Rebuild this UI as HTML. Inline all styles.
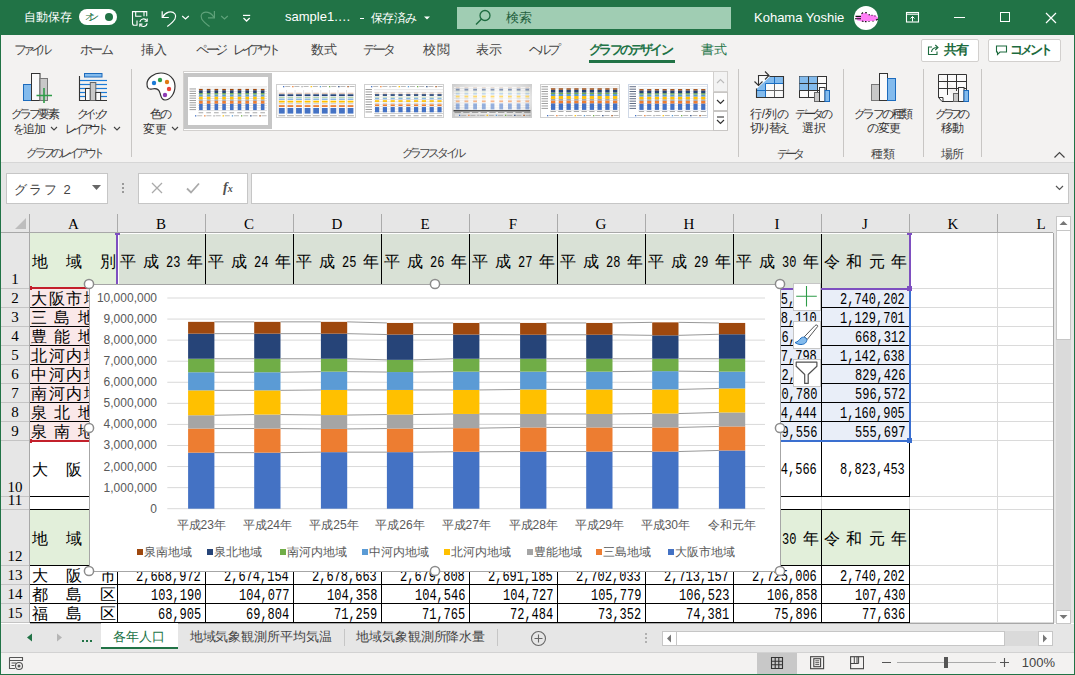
<!DOCTYPE html>
<html><head><meta charset="utf-8"><style>
html,body{margin:0;padding:0;}
body{width:1075px;height:675px;overflow:hidden;position:relative;background:#fff;font-family:'Liberation Sans', sans-serif;}
body>div{position:absolute;white-space:nowrap;box-sizing:border-box;}
body>div.b{box-sizing:border-box}
</style></head><body>
<div style="left:0px;top:0px;width:1075px;height:35px;background:#217346"></div>
<div style="left:24px;top:7.0px;height:20px;line-height:20px;font-size:12px;color:#fff;letter-spacing:0.00px;">自動保存</div>
<div style="left:79px;top:9px;width:38px;height:16px;background:#fff;border-radius:8px"></div>
<div style="left:85px;top:7.300000000000001px;height:20px;line-height:20px;font-size:10px;color:#217346;letter-spacing:-6.00px;">オン</div>
<div style="left:105px;top:13px;width:8px;height:8px;background:#217346;border-radius:50%"></div>
<svg style="position:absolute;left:131px;top:10px;" width="18" height="18" viewBox="0 0 18 18"><path d="M1.5 13.2 V1.6 H15.75 V6.3" fill="none" stroke="#fff" stroke-width="1.1"/><path d="M1.5 13 Q1.5 15.3 3.2 15.3 H6.5" fill="none" stroke="#fff" stroke-width="1.1"/><path d="M4.7 1.6 V6.3 H10.5 M13 1.6 V6.3 M6 10.5 V15" fill="none" stroke="#fff" stroke-width="1.1"/><path d="M8.9 12 A3.7 3.7 0 0 1 15.8 10.8 M16.1 13.4 A3.7 3.7 0 0 1 9.2 14.6" fill="none" stroke="#fff" stroke-width="1.1"/><path d="M16.2 8.6 V11.3 H13.6 M8.8 16.8 V14.1 H11.4" fill="none" stroke="#fff" stroke-width="1.1"/></svg>
<svg style="position:absolute;left:160px;top:9px;" width="20" height="20" viewBox="0 0 20 20"><path d="M2.2 2.3 V8.5 H8.8" fill="none" stroke="#fff" stroke-width="1.2"/><path d="M2.8 8 C5 3 12 1 15 5 C17 8 15.5 11 7.3 17.5" fill="none" stroke="#fff" stroke-width="1.2"/></svg>
<svg style="position:absolute;left:181px;top:15px;" width="9" height="5" viewBox="0 0 9 5"><path d="M1.2 1 L4.5 4 L7.8 1" fill="none" stroke="#fff" stroke-width="1.2"/></svg>
<svg style="position:absolute;left:199px;top:9px;" width="20" height="20" viewBox="0 0 20 20"><path d="M15.4 2 V8.8 H9" fill="none" stroke="#5fa27a" stroke-width="1.2"/><path d="M14.8 8.3 C12.5 3 5.5 1.5 2.8 5 C0.8 8 2 11 10.6 17.5" fill="none" stroke="#5fa27a" stroke-width="1.2"/></svg>
<svg style="position:absolute;left:220px;top:15px;" width="9" height="5" viewBox="0 0 9 5"><path d="M1.2 1 L4.5 4 L7.8 1" fill="none" stroke="#5fa27a" stroke-width="1.2"/></svg>
<svg style="position:absolute;left:242px;top:13px;" width="10" height="10" viewBox="0 0 10 10"><path d="M1 2.4 H8.2" stroke="#fff" stroke-width="1.2"/><path d="M1.5 5 L4.6 8 L7.7 5" fill="none" stroke="#fff" stroke-width="1.3"/></svg>
<div style="left:285px;top:7.300000000000001px;width:400px;height:20px;line-height:20px;font-size:13px;color:#fff;">sample1.…</div>
<div style="left:360px;top:18px;width:4px;height:1px;background:#fff"></div>
<div style="left:370.5px;top:7.5px;height:20px;line-height:20px;font-size:12px;color:#fff;letter-spacing:-0.37px;">保存済み</div>
<svg style="position:absolute;left:424px;top:16px;" width="6" height="4" viewBox="0 0 6 4"><path d="M0 0.5 L3 3.5 L6 0.5Z" fill="#fff"/></svg>
<div style="left:457px;top:7px;width:274px;height:22px;background:#a0cdb3"></div>
<svg style="position:absolute;left:474px;top:9px;" width="18" height="18" viewBox="0 0 18 18"><circle cx="11" cy="6.5" r="5" fill="none" stroke="#1e6b40" stroke-width="1.3"/><path d="M7.5 10 L2 15.5" stroke="#1e6b40" stroke-width="1.4"/></svg>
<div style="left:506px;top:8.0px;width:400px;height:20px;line-height:20px;font-size:13px;color:#1e5e3b;">検索</div>
<div style="left:754px;top:8.0px;width:400px;height:20px;line-height:20px;font-size:13px;color:#fff;">Kohama Yoshie</div>
<div style="left:854px;top:6px;width:24px;height:24px;background:#fff;border-radius:50%"></div>
<svg style="position:absolute;left:850px;top:0.3px;" width="34" height="28" viewBox="0 0 34 28"><path d="M6 17.5 L11 16 L11.5 13.5 L16 12.8 L19 15 L25 15.3 L28 17.5 L27.5 19.5 L24 21 L12 21.6 L7 20.2 Z" fill="#ff7ef6"/><path d="M5.5 16.4 H11 M5 18.8 H11 M11.5 13.8 L13 12.5 M15 12.8 H17 M18.5 14.8 H20 M21.5 15.3 H22.5 M24.5 16 H25.5 M12 21 L13.5 21.6 M15 21.6 H16.5 M18.5 21.5 H19.5 M22.5 21.2 H23.5 M26 20.3 L27.8 19" stroke="#111" stroke-width="1.1"/></svg>
<svg style="position:absolute;left:905px;top:11px;" width="16" height="12" viewBox="0 0 16 12"><rect x="1.5" y="1.5" width="12" height="9.5" fill="none" stroke="#fff" stroke-width="1.1"/><path d="M1.5 3.2 H13.5" stroke="#fff" stroke-width="1.1"/><path d="M7.5 10.5 V5.5 M5.5 7.5 L7.5 5.5 L9.5 7.5" fill="none" stroke="#fff" stroke-width="1"/></svg>
<div style="left:954px;top:17px;width:11px;height:1px;background:#fff"></div>
<div style="left:1000px;top:12px;width:10px;height:10px;border:1px solid #fff;box-sizing:border-box"></div>
<svg style="position:absolute;left:1045px;top:12px;" width="12" height="12" viewBox="0 0 12 12"><path d="M1 1 L11 11 M11 1 L1 11" stroke="#fff" stroke-width="1.2"/></svg>
<div style="left:1px;top:35px;width:1073px;height:128px;background:#f3f2f1"></div>
<div style="left:14px;top:40.0px;height:20px;line-height:20px;font-size:13px;color:#444;letter-spacing:-4.67px;">ファイル</div>
<div style="left:80px;top:40.0px;height:20px;line-height:20px;font-size:13px;color:#444;letter-spacing:-2.70px;">ホーム</div>
<div style="left:141px;top:40.0px;height:20px;line-height:20px;font-size:13px;color:#444;letter-spacing:0.00px;">挿入</div>
<div style="left:196px;top:40.0px;height:20px;line-height:20px;font-size:13px;color:#444;letter-spacing:-3.45px;">ページ</div>
<div style="left:233.3px;top:40.0px;height:20px;line-height:20px;font-size:13px;color:#444;letter-spacing:-4.40px;">レイアウト</div>
<div style="left:310.5px;top:40.0px;height:20px;line-height:20px;font-size:13px;color:#444;letter-spacing:0.50px;">数式</div>
<div style="left:363px;top:40.0px;height:20px;line-height:20px;font-size:13px;color:#444;letter-spacing:-3.00px;">データ</div>
<div style="left:423px;top:40.0px;height:20px;line-height:20px;font-size:13px;color:#444;letter-spacing:1.00px;">校閲</div>
<div style="left:476px;top:40.0px;height:20px;line-height:20px;font-size:13px;color:#444;letter-spacing:0.00px;">表示</div>
<div style="left:529px;top:40.0px;height:20px;line-height:20px;font-size:13px;color:#444;letter-spacing:-3.65px;">ヘルプ</div>
<div style="left:589.3px;top:40.0px;height:20px;line-height:20px;font-size:13px;color:#217346;letter-spacing:-2.80px;font-weight:bold">グラフのデザイン</div>
<div style="left:589px;top:60px;width:86px;height:3px;background:#217346"></div>
<div style="left:701.4px;top:40.0px;height:20px;line-height:20px;font-size:13px;color:#217346;letter-spacing:-0.80px;">書式</div>
<div style="left:921px;top:39px;width:58px;height:23px;background:#fff;border:1px solid #d2d0ce;box-sizing:border-box;border-radius:2px"></div>
<svg style="position:absolute;left:927px;top:43px;" width="13" height="13" viewBox="0 0 13 13"><path d="M5 4 H1.5 V11.5 H10 V8.5" fill="none" stroke="#1d6b3e" stroke-width="1.1"/><path d="M4.5 9 Q5 4.5 10.5 4.5 M8.3 2 L11 4.5 L8.3 7" fill="none" stroke="#1d6b3e" stroke-width="1.1"/></svg>
<div style="left:944px;top:40.0px;height:20px;line-height:20px;font-size:13px;color:#1d6b3e;letter-spacing:-1.00px;font-weight:bold">共有</div>
<div style="left:988px;top:39px;width:73px;height:23px;background:#fff;border:1px solid #d2d0ce;box-sizing:border-box;border-radius:2px"></div>
<svg style="position:absolute;left:995px;top:45px;" width="13" height="11" viewBox="0 0 13 11"><path d="M1.5 1 H11.5 V7 H5 L2.5 9.5 V7 H1.5Z" fill="none" stroke="#1d6b3e" stroke-width="1.1"/></svg>
<div style="left:1010.4px;top:40.0px;height:20px;line-height:20px;font-size:13px;color:#1d6b3e;letter-spacing:-3.23px;font-weight:bold">コメント</div>
<div style="left:1px;top:162px;width:1073px;height:1px;background:#d6d6d6"></div>
<div style="left:131px;top:69px;width:1px;height:88px;background:#c8c6c4"></div>
<div style="left:738px;top:69px;width:1px;height:88px;background:#c8c6c4"></div>
<div style="left:843px;top:69px;width:1px;height:88px;background:#c8c6c4"></div>
<div style="left:923px;top:69px;width:1px;height:88px;background:#c8c6c4"></div>
<div style="left:981px;top:69px;width:1px;height:88px;background:#c8c6c4"></div>
<div style="left:26.3px;top:143.3px;height:20px;line-height:20px;font-size:12px;color:#444;letter-spacing:-3.66px;">グラフのレイアウト</div>
<div style="left:401.7px;top:143.3px;height:20px;line-height:20px;font-size:12px;color:#444;letter-spacing:-3.24px;">グラフ スタイル</div>
<div style="left:776.7px;top:143.5px;height:20px;line-height:20px;font-size:12px;color:#444;letter-spacing:-3.85px;">データ</div>
<div style="left:871.4px;top:143.5px;height:20px;line-height:20px;font-size:12px;color:#444;letter-spacing:-0.10px;">種類</div>
<div style="left:940.5px;top:143.5px;height:20px;line-height:20px;font-size:12px;color:#444;letter-spacing:-0.80px;">場所</div>
<svg style="position:absolute;left:1053px;top:151px;" width="13" height="8" viewBox="0 0 13 8"><path d="M1.5 6.5 L6.5 1.5 L11.5 6.5" fill="none" stroke="#444" stroke-width="1.2"/></svg>
<svg style="position:absolute;left:22px;top:72px;" width="32" height="32" viewBox="0 0 32 32"><rect x="1.5" y="12.5" width="8" height="16" fill="#83bbed" stroke="#1c6bbd" stroke-width="1"/><rect x="9.5" y="1.5" width="8.5" height="27" fill="#fafafa" stroke="#333" stroke-width="1"/><rect x="18" y="6.5" width="7.5" height="22" fill="#c8c8c8" stroke="#777" stroke-width="1"/><path d="M14.5 23.5 H30 M22 16 V31" stroke="#2e9c48" stroke-width="1.6"/></svg>
<div style="left:10.7px;top:103.8px;height:20px;line-height:20px;font-size:12px;color:#333;letter-spacing:-2.73px;">グラフ要素</div>
<div style="left:13px;top:118.6px;height:20px;line-height:20px;font-size:12px;color:#333;letter-spacing:-1.60px;">を追加</div>
<svg style="position:absolute;left:50px;top:126px;" width="8" height="5" viewBox="0 0 8 5"><path d="M1 1 L4 4 L7 1" fill="none" stroke="#444" stroke-width="1.1"/></svg>
<svg style="position:absolute;left:78px;top:72px;" width="30" height="30" viewBox="0 0 30 30"><rect x="6.5" y="1.5" width="17.5" height="3.5" fill="#83bbed" stroke="#1c6bbd" stroke-width="1"/><path d="M1.5 8.5 H29" stroke="#1c7bd6" stroke-width="1.2"/><path d="M1.5 12.5 H29" stroke="#1c7bd6" stroke-width="1.2"/><path d="M1.5 16.5 H29" stroke="#1c7bd6" stroke-width="1.2"/><path d="M1.5 20.5 H29" stroke="#1c7bd6" stroke-width="1.2"/><path d="M1.5 24.5 H29" stroke="#1c7bd6" stroke-width="1.2"/><path d="M1.5 4 V28.5 H29" fill="none" stroke="#333" stroke-width="1.1"/><rect x="7.5" y="16.5" width="4.8" height="12" fill="#fafafa" stroke="#333" stroke-width="1"/><rect x="12.3" y="10.5" width="5.5" height="18" fill="#c8c8c8" stroke="#666" stroke-width="1"/><rect x="17.8" y="20.5" width="4.8" height="8" fill="#fafafa" stroke="#333" stroke-width="1"/></svg>
<div style="left:77px;top:103.8px;height:20px;line-height:20px;font-size:12px;color:#333;letter-spacing:-5.20px;">クイック</div>
<div style="left:64.7px;top:118.6px;height:20px;line-height:20px;font-size:12px;color:#333;letter-spacing:-3.82px;">レイアウト</div>
<svg style="position:absolute;left:112.5px;top:126px;" width="8" height="5" viewBox="0 0 8 5"><path d="M1 1 L4 4 L7 1" fill="none" stroke="#444" stroke-width="1.1"/></svg>
<svg style="position:absolute;left:145px;top:71px;" width="32" height="32" viewBox="0 0 32 32"><path d="M16 2 C24 2 30 8 30 15 C30 23 25 29 20 29 C16 29 16 25 15 22 C14 18 11 17 7 18 C3 19 2 16 2 13 C2 7 9 2 16 2Z" fill="#fff" stroke="#333" stroke-width="1.2"/><circle cx="9" cy="12" r="2.2" fill="#1c7bd6"/><circle cx="15" cy="9" r="2.2" fill="#2e9c48"/><circle cx="22" cy="11" r="2.2" fill="#e07a14"/><circle cx="24" cy="18" r="2.2" fill="#e8423c"/><circle cx="20" cy="24" r="2.2" fill="#8e3cb4"/></svg>
<div style="left:150px;top:103.8px;height:20px;line-height:20px;font-size:12px;color:#333;letter-spacing:-2.00px;">色の</div>
<div style="left:142.9px;top:118.6px;height:20px;line-height:20px;font-size:12px;color:#333;letter-spacing:0.50px;">変更</div>
<svg style="position:absolute;left:171px;top:126px;" width="8" height="5" viewBox="0 0 8 5"><path d="M1 1 L4 4 L7 1" fill="none" stroke="#444" stroke-width="1.1"/></svg>
<div style="left:183px;top:71px;width:531px;height:60px;background:#fff;border:1px solid #d2d0ce;box-sizing:border-box"></div>
<div style="left:184px;top:73px;width:88px;height:56px;background:#c6c6c6"></div>
<div style="left:188px;top:77px;width:80px;height:48px;background:#fff"></div>
<svg style="position:absolute;left:188px;top:84.7px;" width="80" height="34" viewBox="0 0 80 34"><rect x="0.00" y="0.00" width="80.00" height="34.00" fill="#fff" fill-opacity="1"/><rect x="12.00" y="1.30" width="67.00" height="1.20" fill="#e4e4e4" fill-opacity="1"/><rect x="1.50" y="3.50" width="6.50" height="0.90" fill="#7a7a7a" fill-opacity="0.8"/><rect x="1.50" y="5.80" width="6.50" height="0.90" fill="#7a7a7a" fill-opacity="0.8"/><rect x="1.50" y="8.10" width="6.50" height="0.90" fill="#7a7a7a" fill-opacity="0.8"/><rect x="1.50" y="10.40" width="6.50" height="0.90" fill="#7a7a7a" fill-opacity="0.8"/><rect x="1.50" y="12.70" width="6.50" height="0.90" fill="#7a7a7a" fill-opacity="0.8"/><rect x="1.50" y="15.00" width="6.50" height="0.90" fill="#7a7a7a" fill-opacity="0.8"/><rect x="1.50" y="17.30" width="6.50" height="0.90" fill="#7a7a7a" fill-opacity="0.8"/><rect x="1.50" y="19.60" width="6.50" height="0.90" fill="#7a7a7a" fill-opacity="0.8"/><rect x="1.50" y="21.90" width="6.50" height="0.90" fill="#7a7a7a" fill-opacity="0.8"/><rect x="1.50" y="24.20" width="6.50" height="0.90" fill="#7a7a7a" fill-opacity="0.8"/><rect x="10.00" y="3.80" width="69.00" height="0.60" fill="#cfcfcf" fill-opacity="1"/><rect x="10.00" y="6.15" width="69.00" height="0.60" fill="#cfcfcf" fill-opacity="1"/><rect x="10.00" y="8.50" width="69.00" height="0.60" fill="#cfcfcf" fill-opacity="1"/><rect x="10.00" y="10.85" width="69.00" height="0.60" fill="#cfcfcf" fill-opacity="1"/><rect x="10.00" y="13.20" width="69.00" height="0.60" fill="#cfcfcf" fill-opacity="1"/><rect x="10.00" y="15.55" width="69.00" height="0.60" fill="#cfcfcf" fill-opacity="1"/><rect x="10.00" y="17.90" width="69.00" height="0.60" fill="#cfcfcf" fill-opacity="1"/><rect x="10.00" y="20.25" width="69.00" height="0.60" fill="#cfcfcf" fill-opacity="1"/><rect x="10.00" y="22.60" width="69.00" height="0.60" fill="#cfcfcf" fill-opacity="1"/><rect x="10.00" y="24.95" width="69.00" height="0.60" fill="#cfcfcf" fill-opacity="1"/><rect x="11.10" y="18.60" width="3.60" height="6.50" fill="#4472c4" fill-opacity="1"/><rect x="11.10" y="15.88" width="3.60" height="2.73" fill="#ed7d31" fill-opacity="1"/><rect x="11.10" y="14.28" width="3.60" height="1.60" fill="#a5a5a5" fill-opacity="1"/><rect x="11.10" y="11.51" width="3.60" height="2.77" fill="#ffc000" fill-opacity="1"/><rect x="11.10" y="9.51" width="3.60" height="2.00" fill="#5b9bd5" fill-opacity="1"/><rect x="11.10" y="8.06" width="3.60" height="1.45" fill="#70ad47" fill-opacity="1"/><rect x="11.10" y="5.25" width="3.60" height="2.81" fill="#264478" fill-opacity="1"/><rect x="11.10" y="3.91" width="3.60" height="1.34" fill="#9e480e" fill-opacity="1"/><rect x="10.60" y="27.40" width="4.60" height="0.80" fill="#666" fill-opacity="0.7"/><rect x="18.82" y="18.60" width="3.60" height="6.50" fill="#4472c4" fill-opacity="1"/><rect x="18.82" y="15.88" width="3.60" height="2.73" fill="#ed7d31" fill-opacity="1"/><rect x="18.82" y="14.28" width="3.60" height="1.60" fill="#a5a5a5" fill-opacity="1"/><rect x="18.82" y="11.51" width="3.60" height="2.77" fill="#ffc000" fill-opacity="1"/><rect x="18.82" y="9.51" width="3.60" height="2.00" fill="#5b9bd5" fill-opacity="1"/><rect x="18.82" y="8.06" width="3.60" height="1.45" fill="#70ad47" fill-opacity="1"/><rect x="18.82" y="5.25" width="3.60" height="2.81" fill="#264478" fill-opacity="1"/><rect x="18.82" y="3.91" width="3.60" height="1.34" fill="#9e480e" fill-opacity="1"/><rect x="18.32" y="27.40" width="4.60" height="0.80" fill="#666" fill-opacity="0.7"/><rect x="26.54" y="18.60" width="3.60" height="6.50" fill="#4472c4" fill-opacity="1"/><rect x="26.54" y="15.88" width="3.60" height="2.73" fill="#ed7d31" fill-opacity="1"/><rect x="26.54" y="14.28" width="3.60" height="1.60" fill="#a5a5a5" fill-opacity="1"/><rect x="26.54" y="11.51" width="3.60" height="2.77" fill="#ffc000" fill-opacity="1"/><rect x="26.54" y="9.51" width="3.60" height="2.00" fill="#5b9bd5" fill-opacity="1"/><rect x="26.54" y="8.06" width="3.60" height="1.45" fill="#70ad47" fill-opacity="1"/><rect x="26.54" y="5.25" width="3.60" height="2.81" fill="#264478" fill-opacity="1"/><rect x="26.54" y="3.91" width="3.60" height="1.34" fill="#9e480e" fill-opacity="1"/><rect x="26.04" y="27.40" width="4.60" height="0.80" fill="#666" fill-opacity="0.7"/><rect x="34.26" y="18.60" width="3.60" height="6.50" fill="#4472c4" fill-opacity="1"/><rect x="34.26" y="15.88" width="3.60" height="2.73" fill="#ed7d31" fill-opacity="1"/><rect x="34.26" y="14.28" width="3.60" height="1.60" fill="#a5a5a5" fill-opacity="1"/><rect x="34.26" y="11.51" width="3.60" height="2.77" fill="#ffc000" fill-opacity="1"/><rect x="34.26" y="9.51" width="3.60" height="2.00" fill="#5b9bd5" fill-opacity="1"/><rect x="34.26" y="8.06" width="3.60" height="1.45" fill="#70ad47" fill-opacity="1"/><rect x="34.26" y="5.25" width="3.60" height="2.81" fill="#264478" fill-opacity="1"/><rect x="34.26" y="3.91" width="3.60" height="1.34" fill="#9e480e" fill-opacity="1"/><rect x="33.76" y="27.40" width="4.60" height="0.80" fill="#666" fill-opacity="0.7"/><rect x="41.98" y="18.60" width="3.60" height="6.50" fill="#4472c4" fill-opacity="1"/><rect x="41.98" y="15.88" width="3.60" height="2.73" fill="#ed7d31" fill-opacity="1"/><rect x="41.98" y="14.28" width="3.60" height="1.60" fill="#a5a5a5" fill-opacity="1"/><rect x="41.98" y="11.51" width="3.60" height="2.77" fill="#ffc000" fill-opacity="1"/><rect x="41.98" y="9.51" width="3.60" height="2.00" fill="#5b9bd5" fill-opacity="1"/><rect x="41.98" y="8.06" width="3.60" height="1.45" fill="#70ad47" fill-opacity="1"/><rect x="41.98" y="5.25" width="3.60" height="2.81" fill="#264478" fill-opacity="1"/><rect x="41.98" y="3.91" width="3.60" height="1.34" fill="#9e480e" fill-opacity="1"/><rect x="41.48" y="27.40" width="4.60" height="0.80" fill="#666" fill-opacity="0.7"/><rect x="49.70" y="18.60" width="3.60" height="6.50" fill="#4472c4" fill-opacity="1"/><rect x="49.70" y="15.88" width="3.60" height="2.73" fill="#ed7d31" fill-opacity="1"/><rect x="49.70" y="14.28" width="3.60" height="1.60" fill="#a5a5a5" fill-opacity="1"/><rect x="49.70" y="11.51" width="3.60" height="2.77" fill="#ffc000" fill-opacity="1"/><rect x="49.70" y="9.51" width="3.60" height="2.00" fill="#5b9bd5" fill-opacity="1"/><rect x="49.70" y="8.06" width="3.60" height="1.45" fill="#70ad47" fill-opacity="1"/><rect x="49.70" y="5.25" width="3.60" height="2.81" fill="#264478" fill-opacity="1"/><rect x="49.70" y="3.91" width="3.60" height="1.34" fill="#9e480e" fill-opacity="1"/><rect x="49.20" y="27.40" width="4.60" height="0.80" fill="#666" fill-opacity="0.7"/><rect x="57.42" y="18.60" width="3.60" height="6.50" fill="#4472c4" fill-opacity="1"/><rect x="57.42" y="15.88" width="3.60" height="2.73" fill="#ed7d31" fill-opacity="1"/><rect x="57.42" y="14.28" width="3.60" height="1.60" fill="#a5a5a5" fill-opacity="1"/><rect x="57.42" y="11.51" width="3.60" height="2.77" fill="#ffc000" fill-opacity="1"/><rect x="57.42" y="9.51" width="3.60" height="2.00" fill="#5b9bd5" fill-opacity="1"/><rect x="57.42" y="8.06" width="3.60" height="1.45" fill="#70ad47" fill-opacity="1"/><rect x="57.42" y="5.25" width="3.60" height="2.81" fill="#264478" fill-opacity="1"/><rect x="57.42" y="3.91" width="3.60" height="1.34" fill="#9e480e" fill-opacity="1"/><rect x="56.92" y="27.40" width="4.60" height="0.80" fill="#666" fill-opacity="0.7"/><rect x="65.14" y="18.60" width="3.60" height="6.50" fill="#4472c4" fill-opacity="1"/><rect x="65.14" y="15.88" width="3.60" height="2.73" fill="#ed7d31" fill-opacity="1"/><rect x="65.14" y="14.28" width="3.60" height="1.60" fill="#a5a5a5" fill-opacity="1"/><rect x="65.14" y="11.51" width="3.60" height="2.77" fill="#ffc000" fill-opacity="1"/><rect x="65.14" y="9.51" width="3.60" height="2.00" fill="#5b9bd5" fill-opacity="1"/><rect x="65.14" y="8.06" width="3.60" height="1.45" fill="#70ad47" fill-opacity="1"/><rect x="65.14" y="5.25" width="3.60" height="2.81" fill="#264478" fill-opacity="1"/><rect x="65.14" y="3.91" width="3.60" height="1.34" fill="#9e480e" fill-opacity="1"/><rect x="64.64" y="27.40" width="4.60" height="0.80" fill="#666" fill-opacity="0.7"/><rect x="72.86" y="18.60" width="3.60" height="6.50" fill="#4472c4" fill-opacity="1"/><rect x="72.86" y="15.88" width="3.60" height="2.73" fill="#ed7d31" fill-opacity="1"/><rect x="72.86" y="14.28" width="3.60" height="1.60" fill="#a5a5a5" fill-opacity="1"/><rect x="72.86" y="11.51" width="3.60" height="2.77" fill="#ffc000" fill-opacity="1"/><rect x="72.86" y="9.51" width="3.60" height="2.00" fill="#5b9bd5" fill-opacity="1"/><rect x="72.86" y="8.06" width="3.60" height="1.45" fill="#70ad47" fill-opacity="1"/><rect x="72.86" y="5.25" width="3.60" height="2.81" fill="#264478" fill-opacity="1"/><rect x="72.86" y="3.91" width="3.60" height="1.34" fill="#9e480e" fill-opacity="1"/><rect x="72.36" y="27.40" width="4.60" height="0.80" fill="#666" fill-opacity="0.7"/><rect x="7.00" y="30.20" width="1.30" height="1.30" fill="#4472c4" fill-opacity="1"/><rect x="9.20" y="30.40" width="5.00" height="0.80" fill="#888" fill-opacity="0.7"/><rect x="16.20" y="30.20" width="1.30" height="1.30" fill="#ed7d31" fill-opacity="1"/><rect x="18.40" y="30.40" width="5.00" height="0.80" fill="#888" fill-opacity="0.7"/><rect x="25.40" y="30.20" width="1.30" height="1.30" fill="#a5a5a5" fill-opacity="1"/><rect x="27.60" y="30.40" width="5.00" height="0.80" fill="#888" fill-opacity="0.7"/><rect x="34.60" y="30.20" width="1.30" height="1.30" fill="#ffc000" fill-opacity="1"/><rect x="36.80" y="30.40" width="5.00" height="0.80" fill="#888" fill-opacity="0.7"/><rect x="43.80" y="30.20" width="1.30" height="1.30" fill="#5b9bd5" fill-opacity="1"/><rect x="46.00" y="30.40" width="5.00" height="0.80" fill="#888" fill-opacity="0.7"/><rect x="53.00" y="30.20" width="1.30" height="1.30" fill="#70ad47" fill-opacity="1"/><rect x="55.20" y="30.40" width="5.00" height="0.80" fill="#888" fill-opacity="0.7"/><rect x="62.20" y="30.20" width="1.30" height="1.30" fill="#264478" fill-opacity="1"/><rect x="64.40" y="30.40" width="5.00" height="0.80" fill="#888" fill-opacity="0.7"/><rect x="71.40" y="30.20" width="1.30" height="1.30" fill="#9e480e" fill-opacity="1"/><rect x="73.60" y="30.40" width="5.00" height="0.80" fill="#888" fill-opacity="0.7"/></svg>
<svg style="position:absolute;left:276px;top:83.8px;" width="80" height="34" viewBox="0 0 80 34"><rect x="0.5" y="0.5" width="79" height="33" fill="#fff" stroke="#d0d0d0"/><rect x="1.40" y="6.00" width="0.90" height="25.00" fill="#e2e2e2" fill-opacity="1"/><rect x="9.99" y="6.00" width="0.90" height="25.00" fill="#e2e2e2" fill-opacity="1"/><rect x="18.58" y="6.00" width="0.90" height="25.00" fill="#e2e2e2" fill-opacity="1"/><rect x="27.17" y="6.00" width="0.90" height="25.00" fill="#e2e2e2" fill-opacity="1"/><rect x="35.76" y="6.00" width="0.90" height="25.00" fill="#e2e2e2" fill-opacity="1"/><rect x="44.35" y="6.00" width="0.90" height="25.00" fill="#e2e2e2" fill-opacity="1"/><rect x="52.94" y="6.00" width="0.90" height="25.00" fill="#e2e2e2" fill-opacity="1"/><rect x="61.53" y="6.00" width="0.90" height="25.00" fill="#e2e2e2" fill-opacity="1"/><rect x="70.12" y="6.00" width="0.90" height="25.00" fill="#e2e2e2" fill-opacity="1"/><rect x="2.90" y="23.95" width="5.80" height="5.65" fill="#4472c4" fill-opacity="1"/><rect x="2.90" y="21.16" width="5.80" height="1.79" fill="#ed7d31" fill-opacity="1"/><rect x="2.90" y="19.53" width="5.80" height="0.64" fill="#a5a5a5" fill-opacity="1"/><rect x="2.90" y="16.69" width="5.80" height="1.83" fill="#ffc000" fill-opacity="1"/><rect x="2.90" y="14.64" width="5.80" height="1.05" fill="#5b9bd5" fill-opacity="1"/><rect x="2.90" y="13.16" width="5.80" height="0.48" fill="#70ad47" fill-opacity="1"/><rect x="2.90" y="10.28" width="5.80" height="1.88" fill="#264478" fill-opacity="1"/><rect x="2.90" y="8.91" width="5.80" height="0.37" fill="#9e480e" fill-opacity="1"/><rect x="2.40" y="31.40" width="6.80" height="0.80" fill="#666" fill-opacity="0.7"/><rect x="11.49" y="23.95" width="5.80" height="5.65" fill="#4472c4" fill-opacity="1"/><rect x="11.49" y="21.16" width="5.80" height="1.79" fill="#ed7d31" fill-opacity="1"/><rect x="11.49" y="19.53" width="5.80" height="0.64" fill="#a5a5a5" fill-opacity="1"/><rect x="11.49" y="16.69" width="5.80" height="1.83" fill="#ffc000" fill-opacity="1"/><rect x="11.49" y="14.64" width="5.80" height="1.05" fill="#5b9bd5" fill-opacity="1"/><rect x="11.49" y="13.16" width="5.80" height="0.48" fill="#70ad47" fill-opacity="1"/><rect x="11.49" y="10.28" width="5.80" height="1.88" fill="#264478" fill-opacity="1"/><rect x="11.49" y="8.91" width="5.80" height="0.37" fill="#9e480e" fill-opacity="1"/><rect x="10.99" y="31.40" width="6.80" height="0.80" fill="#666" fill-opacity="0.7"/><rect x="20.08" y="23.95" width="5.80" height="5.65" fill="#4472c4" fill-opacity="1"/><rect x="20.08" y="21.16" width="5.80" height="1.79" fill="#ed7d31" fill-opacity="1"/><rect x="20.08" y="19.53" width="5.80" height="0.64" fill="#a5a5a5" fill-opacity="1"/><rect x="20.08" y="16.69" width="5.80" height="1.83" fill="#ffc000" fill-opacity="1"/><rect x="20.08" y="14.64" width="5.80" height="1.05" fill="#5b9bd5" fill-opacity="1"/><rect x="20.08" y="13.16" width="5.80" height="0.48" fill="#70ad47" fill-opacity="1"/><rect x="20.08" y="10.28" width="5.80" height="1.88" fill="#264478" fill-opacity="1"/><rect x="20.08" y="8.91" width="5.80" height="0.37" fill="#9e480e" fill-opacity="1"/><rect x="19.58" y="31.40" width="6.80" height="0.80" fill="#666" fill-opacity="0.7"/><rect x="28.67" y="23.95" width="5.80" height="5.65" fill="#4472c4" fill-opacity="1"/><rect x="28.67" y="21.16" width="5.80" height="1.79" fill="#ed7d31" fill-opacity="1"/><rect x="28.67" y="19.53" width="5.80" height="0.64" fill="#a5a5a5" fill-opacity="1"/><rect x="28.67" y="16.69" width="5.80" height="1.83" fill="#ffc000" fill-opacity="1"/><rect x="28.67" y="14.64" width="5.80" height="1.05" fill="#5b9bd5" fill-opacity="1"/><rect x="28.67" y="13.16" width="5.80" height="0.48" fill="#70ad47" fill-opacity="1"/><rect x="28.67" y="10.28" width="5.80" height="1.88" fill="#264478" fill-opacity="1"/><rect x="28.67" y="8.91" width="5.80" height="0.37" fill="#9e480e" fill-opacity="1"/><rect x="28.17" y="31.40" width="6.80" height="0.80" fill="#666" fill-opacity="0.7"/><rect x="37.26" y="23.95" width="5.80" height="5.65" fill="#4472c4" fill-opacity="1"/><rect x="37.26" y="21.16" width="5.80" height="1.79" fill="#ed7d31" fill-opacity="1"/><rect x="37.26" y="19.53" width="5.80" height="0.64" fill="#a5a5a5" fill-opacity="1"/><rect x="37.26" y="16.69" width="5.80" height="1.83" fill="#ffc000" fill-opacity="1"/><rect x="37.26" y="14.64" width="5.80" height="1.05" fill="#5b9bd5" fill-opacity="1"/><rect x="37.26" y="13.16" width="5.80" height="0.48" fill="#70ad47" fill-opacity="1"/><rect x="37.26" y="10.28" width="5.80" height="1.88" fill="#264478" fill-opacity="1"/><rect x="37.26" y="8.91" width="5.80" height="0.37" fill="#9e480e" fill-opacity="1"/><rect x="36.76" y="31.40" width="6.80" height="0.80" fill="#666" fill-opacity="0.7"/><rect x="45.85" y="23.95" width="5.80" height="5.65" fill="#4472c4" fill-opacity="1"/><rect x="45.85" y="21.16" width="5.80" height="1.79" fill="#ed7d31" fill-opacity="1"/><rect x="45.85" y="19.53" width="5.80" height="0.64" fill="#a5a5a5" fill-opacity="1"/><rect x="45.85" y="16.69" width="5.80" height="1.83" fill="#ffc000" fill-opacity="1"/><rect x="45.85" y="14.64" width="5.80" height="1.05" fill="#5b9bd5" fill-opacity="1"/><rect x="45.85" y="13.16" width="5.80" height="0.48" fill="#70ad47" fill-opacity="1"/><rect x="45.85" y="10.28" width="5.80" height="1.88" fill="#264478" fill-opacity="1"/><rect x="45.85" y="8.91" width="5.80" height="0.37" fill="#9e480e" fill-opacity="1"/><rect x="45.35" y="31.40" width="6.80" height="0.80" fill="#666" fill-opacity="0.7"/><rect x="54.44" y="23.95" width="5.80" height="5.65" fill="#4472c4" fill-opacity="1"/><rect x="54.44" y="21.16" width="5.80" height="1.79" fill="#ed7d31" fill-opacity="1"/><rect x="54.44" y="19.53" width="5.80" height="0.64" fill="#a5a5a5" fill-opacity="1"/><rect x="54.44" y="16.69" width="5.80" height="1.83" fill="#ffc000" fill-opacity="1"/><rect x="54.44" y="14.64" width="5.80" height="1.05" fill="#5b9bd5" fill-opacity="1"/><rect x="54.44" y="13.16" width="5.80" height="0.48" fill="#70ad47" fill-opacity="1"/><rect x="54.44" y="10.28" width="5.80" height="1.88" fill="#264478" fill-opacity="1"/><rect x="54.44" y="8.91" width="5.80" height="0.37" fill="#9e480e" fill-opacity="1"/><rect x="53.94" y="31.40" width="6.80" height="0.80" fill="#666" fill-opacity="0.7"/><rect x="63.03" y="23.95" width="5.80" height="5.65" fill="#4472c4" fill-opacity="1"/><rect x="63.03" y="21.16" width="5.80" height="1.79" fill="#ed7d31" fill-opacity="1"/><rect x="63.03" y="19.53" width="5.80" height="0.64" fill="#a5a5a5" fill-opacity="1"/><rect x="63.03" y="16.69" width="5.80" height="1.83" fill="#ffc000" fill-opacity="1"/><rect x="63.03" y="14.64" width="5.80" height="1.05" fill="#5b9bd5" fill-opacity="1"/><rect x="63.03" y="13.16" width="5.80" height="0.48" fill="#70ad47" fill-opacity="1"/><rect x="63.03" y="10.28" width="5.80" height="1.88" fill="#264478" fill-opacity="1"/><rect x="63.03" y="8.91" width="5.80" height="0.37" fill="#9e480e" fill-opacity="1"/><rect x="62.53" y="31.40" width="6.80" height="0.80" fill="#666" fill-opacity="0.7"/><rect x="71.62" y="23.95" width="5.80" height="5.65" fill="#4472c4" fill-opacity="1"/><rect x="71.62" y="21.16" width="5.80" height="1.79" fill="#ed7d31" fill-opacity="1"/><rect x="71.62" y="19.53" width="5.80" height="0.64" fill="#a5a5a5" fill-opacity="1"/><rect x="71.62" y="16.69" width="5.80" height="1.83" fill="#ffc000" fill-opacity="1"/><rect x="71.62" y="14.64" width="5.80" height="1.05" fill="#5b9bd5" fill-opacity="1"/><rect x="71.62" y="13.16" width="5.80" height="0.48" fill="#70ad47" fill-opacity="1"/><rect x="71.62" y="10.28" width="5.80" height="1.88" fill="#264478" fill-opacity="1"/><rect x="71.62" y="8.91" width="5.80" height="0.37" fill="#9e480e" fill-opacity="1"/><rect x="71.12" y="31.40" width="6.80" height="0.80" fill="#666" fill-opacity="0.7"/><rect x="7.00" y="2.00" width="1.30" height="1.30" fill="#4472c4" fill-opacity="1"/><rect x="9.20" y="2.20" width="5.00" height="0.80" fill="#888" fill-opacity="0.7"/><rect x="16.20" y="2.00" width="1.30" height="1.30" fill="#ed7d31" fill-opacity="1"/><rect x="18.40" y="2.20" width="5.00" height="0.80" fill="#888" fill-opacity="0.7"/><rect x="25.40" y="2.00" width="1.30" height="1.30" fill="#a5a5a5" fill-opacity="1"/><rect x="27.60" y="2.20" width="5.00" height="0.80" fill="#888" fill-opacity="0.7"/><rect x="34.60" y="2.00" width="1.30" height="1.30" fill="#ffc000" fill-opacity="1"/><rect x="36.80" y="2.20" width="5.00" height="0.80" fill="#888" fill-opacity="0.7"/><rect x="43.80" y="2.00" width="1.30" height="1.30" fill="#5b9bd5" fill-opacity="1"/><rect x="46.00" y="2.20" width="5.00" height="0.80" fill="#888" fill-opacity="0.7"/><rect x="53.00" y="2.00" width="1.30" height="1.30" fill="#70ad47" fill-opacity="1"/><rect x="55.20" y="2.20" width="5.00" height="0.80" fill="#888" fill-opacity="0.7"/><rect x="62.20" y="2.00" width="1.30" height="1.30" fill="#264478" fill-opacity="1"/><rect x="64.40" y="2.20" width="5.00" height="0.80" fill="#888" fill-opacity="0.7"/><rect x="71.40" y="2.00" width="1.30" height="1.30" fill="#9e480e" fill-opacity="1"/><rect x="73.60" y="2.20" width="5.00" height="0.80" fill="#888" fill-opacity="0.7"/></svg>
<svg style="position:absolute;left:364px;top:83.8px;" width="80" height="34" viewBox="0 0 80 34"><rect x="0.5" y="0.5" width="79" height="33" fill="#fff" stroke="#d0d0d0"/><rect x="1.50" y="5.00" width="6.50" height="0.90" fill="#7a7a7a" fill-opacity="0.8"/><rect x="1.50" y="7.50" width="6.50" height="0.90" fill="#7a7a7a" fill-opacity="0.8"/><rect x="1.50" y="10.00" width="6.50" height="0.90" fill="#7a7a7a" fill-opacity="0.8"/><rect x="1.50" y="12.50" width="6.50" height="0.90" fill="#7a7a7a" fill-opacity="0.8"/><rect x="1.50" y="15.00" width="6.50" height="0.90" fill="#7a7a7a" fill-opacity="0.8"/><rect x="1.50" y="17.50" width="6.50" height="0.90" fill="#7a7a7a" fill-opacity="0.8"/><rect x="1.50" y="20.00" width="6.50" height="0.90" fill="#7a7a7a" fill-opacity="0.8"/><rect x="1.50" y="22.50" width="6.50" height="0.90" fill="#7a7a7a" fill-opacity="0.8"/><rect x="1.50" y="25.00" width="6.50" height="0.90" fill="#7a7a7a" fill-opacity="0.8"/><rect x="1.50" y="27.50" width="6.50" height="0.90" fill="#7a7a7a" fill-opacity="0.8"/><rect x="10.00" y="5.50" width="69.00" height="0.60" fill="#d6d6d6" fill-opacity="1"/><rect x="10.00" y="7.90" width="69.00" height="0.60" fill="#d6d6d6" fill-opacity="1"/><rect x="10.00" y="10.30" width="69.00" height="0.60" fill="#d6d6d6" fill-opacity="1"/><rect x="10.00" y="12.70" width="69.00" height="0.60" fill="#d6d6d6" fill-opacity="1"/><rect x="10.00" y="15.10" width="69.00" height="0.60" fill="#d6d6d6" fill-opacity="1"/><rect x="10.00" y="17.50" width="69.00" height="0.60" fill="#d6d6d6" fill-opacity="1"/><rect x="10.00" y="19.90" width="69.00" height="0.60" fill="#d6d6d6" fill-opacity="1"/><rect x="10.00" y="22.30" width="69.00" height="0.60" fill="#d6d6d6" fill-opacity="1"/><rect x="10.00" y="24.70" width="69.00" height="0.60" fill="#d6d6d6" fill-opacity="1"/><rect x="10.00" y="27.10" width="69.00" height="0.60" fill="#d6d6d6" fill-opacity="1"/><rect x="10.00" y="29.00" width="69.00" height="1.00" fill="#cfcfcf" fill-opacity="1"/><rect x="11.00" y="23.05" width="4.20" height="5.25" fill="#4472c4" fill-opacity="1"/><rect x="11.00" y="20.42" width="4.20" height="1.62" fill="#ed7d31" fill-opacity="1"/><rect x="11.00" y="18.89" width="4.20" height="0.54" fill="#a5a5a5" fill-opacity="1"/><rect x="11.00" y="16.22" width="4.20" height="1.67" fill="#ffc000" fill-opacity="1"/><rect x="11.00" y="14.29" width="4.20" height="0.93" fill="#5b9bd5" fill-opacity="1"/><rect x="11.00" y="12.90" width="4.20" height="0.39" fill="#70ad47" fill-opacity="1"/><rect x="11.00" y="10.19" width="4.20" height="1.71" fill="#264478" fill-opacity="1"/><rect x="11.00" y="8.90" width="4.20" height="0.29" fill="#9e480e" fill-opacity="1"/><rect x="10.50" y="31.40" width="5.20" height="0.80" fill="#666" fill-opacity="0.7"/><rect x="18.80" y="23.05" width="4.20" height="5.25" fill="#4472c4" fill-opacity="1"/><rect x="18.80" y="20.42" width="4.20" height="1.62" fill="#ed7d31" fill-opacity="1"/><rect x="18.80" y="18.89" width="4.20" height="0.54" fill="#a5a5a5" fill-opacity="1"/><rect x="18.80" y="16.22" width="4.20" height="1.67" fill="#ffc000" fill-opacity="1"/><rect x="18.80" y="14.29" width="4.20" height="0.93" fill="#5b9bd5" fill-opacity="1"/><rect x="18.80" y="12.90" width="4.20" height="0.39" fill="#70ad47" fill-opacity="1"/><rect x="18.80" y="10.19" width="4.20" height="1.71" fill="#264478" fill-opacity="1"/><rect x="18.80" y="8.90" width="4.20" height="0.29" fill="#9e480e" fill-opacity="1"/><rect x="18.30" y="31.40" width="5.20" height="0.80" fill="#666" fill-opacity="0.7"/><rect x="26.60" y="23.05" width="4.20" height="5.25" fill="#4472c4" fill-opacity="1"/><rect x="26.60" y="20.42" width="4.20" height="1.62" fill="#ed7d31" fill-opacity="1"/><rect x="26.60" y="18.89" width="4.20" height="0.54" fill="#a5a5a5" fill-opacity="1"/><rect x="26.60" y="16.22" width="4.20" height="1.67" fill="#ffc000" fill-opacity="1"/><rect x="26.60" y="14.29" width="4.20" height="0.93" fill="#5b9bd5" fill-opacity="1"/><rect x="26.60" y="12.90" width="4.20" height="0.39" fill="#70ad47" fill-opacity="1"/><rect x="26.60" y="10.19" width="4.20" height="1.71" fill="#264478" fill-opacity="1"/><rect x="26.60" y="8.90" width="4.20" height="0.29" fill="#9e480e" fill-opacity="1"/><rect x="26.10" y="31.40" width="5.20" height="0.80" fill="#666" fill-opacity="0.7"/><rect x="34.40" y="23.05" width="4.20" height="5.25" fill="#4472c4" fill-opacity="1"/><rect x="34.40" y="20.42" width="4.20" height="1.62" fill="#ed7d31" fill-opacity="1"/><rect x="34.40" y="18.89" width="4.20" height="0.54" fill="#a5a5a5" fill-opacity="1"/><rect x="34.40" y="16.22" width="4.20" height="1.67" fill="#ffc000" fill-opacity="1"/><rect x="34.40" y="14.29" width="4.20" height="0.93" fill="#5b9bd5" fill-opacity="1"/><rect x="34.40" y="12.90" width="4.20" height="0.39" fill="#70ad47" fill-opacity="1"/><rect x="34.40" y="10.19" width="4.20" height="1.71" fill="#264478" fill-opacity="1"/><rect x="34.40" y="8.90" width="4.20" height="0.29" fill="#9e480e" fill-opacity="1"/><rect x="33.90" y="31.40" width="5.20" height="0.80" fill="#666" fill-opacity="0.7"/><rect x="42.20" y="23.05" width="4.20" height="5.25" fill="#4472c4" fill-opacity="1"/><rect x="42.20" y="20.42" width="4.20" height="1.62" fill="#ed7d31" fill-opacity="1"/><rect x="42.20" y="18.89" width="4.20" height="0.54" fill="#a5a5a5" fill-opacity="1"/><rect x="42.20" y="16.22" width="4.20" height="1.67" fill="#ffc000" fill-opacity="1"/><rect x="42.20" y="14.29" width="4.20" height="0.93" fill="#5b9bd5" fill-opacity="1"/><rect x="42.20" y="12.90" width="4.20" height="0.39" fill="#70ad47" fill-opacity="1"/><rect x="42.20" y="10.19" width="4.20" height="1.71" fill="#264478" fill-opacity="1"/><rect x="42.20" y="8.90" width="4.20" height="0.29" fill="#9e480e" fill-opacity="1"/><rect x="41.70" y="31.40" width="5.20" height="0.80" fill="#666" fill-opacity="0.7"/><rect x="50.00" y="23.05" width="4.20" height="5.25" fill="#4472c4" fill-opacity="1"/><rect x="50.00" y="20.42" width="4.20" height="1.62" fill="#ed7d31" fill-opacity="1"/><rect x="50.00" y="18.89" width="4.20" height="0.54" fill="#a5a5a5" fill-opacity="1"/><rect x="50.00" y="16.22" width="4.20" height="1.67" fill="#ffc000" fill-opacity="1"/><rect x="50.00" y="14.29" width="4.20" height="0.93" fill="#5b9bd5" fill-opacity="1"/><rect x="50.00" y="12.90" width="4.20" height="0.39" fill="#70ad47" fill-opacity="1"/><rect x="50.00" y="10.19" width="4.20" height="1.71" fill="#264478" fill-opacity="1"/><rect x="50.00" y="8.90" width="4.20" height="0.29" fill="#9e480e" fill-opacity="1"/><rect x="49.50" y="31.40" width="5.20" height="0.80" fill="#666" fill-opacity="0.7"/><rect x="57.80" y="23.05" width="4.20" height="5.25" fill="#4472c4" fill-opacity="1"/><rect x="57.80" y="20.42" width="4.20" height="1.62" fill="#ed7d31" fill-opacity="1"/><rect x="57.80" y="18.89" width="4.20" height="0.54" fill="#a5a5a5" fill-opacity="1"/><rect x="57.80" y="16.22" width="4.20" height="1.67" fill="#ffc000" fill-opacity="1"/><rect x="57.80" y="14.29" width="4.20" height="0.93" fill="#5b9bd5" fill-opacity="1"/><rect x="57.80" y="12.90" width="4.20" height="0.39" fill="#70ad47" fill-opacity="1"/><rect x="57.80" y="10.19" width="4.20" height="1.71" fill="#264478" fill-opacity="1"/><rect x="57.80" y="8.90" width="4.20" height="0.29" fill="#9e480e" fill-opacity="1"/><rect x="57.30" y="31.40" width="5.20" height="0.80" fill="#666" fill-opacity="0.7"/><rect x="65.60" y="23.05" width="4.20" height="5.25" fill="#4472c4" fill-opacity="1"/><rect x="65.60" y="20.42" width="4.20" height="1.62" fill="#ed7d31" fill-opacity="1"/><rect x="65.60" y="18.89" width="4.20" height="0.54" fill="#a5a5a5" fill-opacity="1"/><rect x="65.60" y="16.22" width="4.20" height="1.67" fill="#ffc000" fill-opacity="1"/><rect x="65.60" y="14.29" width="4.20" height="0.93" fill="#5b9bd5" fill-opacity="1"/><rect x="65.60" y="12.90" width="4.20" height="0.39" fill="#70ad47" fill-opacity="1"/><rect x="65.60" y="10.19" width="4.20" height="1.71" fill="#264478" fill-opacity="1"/><rect x="65.60" y="8.90" width="4.20" height="0.29" fill="#9e480e" fill-opacity="1"/><rect x="65.10" y="31.40" width="5.20" height="0.80" fill="#666" fill-opacity="0.7"/><rect x="73.40" y="23.05" width="4.20" height="5.25" fill="#4472c4" fill-opacity="1"/><rect x="73.40" y="20.42" width="4.20" height="1.62" fill="#ed7d31" fill-opacity="1"/><rect x="73.40" y="18.89" width="4.20" height="0.54" fill="#a5a5a5" fill-opacity="1"/><rect x="73.40" y="16.22" width="4.20" height="1.67" fill="#ffc000" fill-opacity="1"/><rect x="73.40" y="14.29" width="4.20" height="0.93" fill="#5b9bd5" fill-opacity="1"/><rect x="73.40" y="12.90" width="4.20" height="0.39" fill="#70ad47" fill-opacity="1"/><rect x="73.40" y="10.19" width="4.20" height="1.71" fill="#264478" fill-opacity="1"/><rect x="73.40" y="8.90" width="4.20" height="0.29" fill="#9e480e" fill-opacity="1"/><rect x="72.90" y="31.40" width="5.20" height="0.80" fill="#666" fill-opacity="0.7"/><rect x="7.00" y="2.00" width="1.30" height="1.30" fill="#4472c4" fill-opacity="1"/><rect x="9.20" y="2.20" width="5.00" height="0.80" fill="#888" fill-opacity="0.7"/><rect x="16.20" y="2.00" width="1.30" height="1.30" fill="#ed7d31" fill-opacity="1"/><rect x="18.40" y="2.20" width="5.00" height="0.80" fill="#888" fill-opacity="0.7"/><rect x="25.40" y="2.00" width="1.30" height="1.30" fill="#a5a5a5" fill-opacity="1"/><rect x="27.60" y="2.20" width="5.00" height="0.80" fill="#888" fill-opacity="0.7"/><rect x="34.60" y="2.00" width="1.30" height="1.30" fill="#ffc000" fill-opacity="1"/><rect x="36.80" y="2.20" width="5.00" height="0.80" fill="#888" fill-opacity="0.7"/><rect x="43.80" y="2.00" width="1.30" height="1.30" fill="#5b9bd5" fill-opacity="1"/><rect x="46.00" y="2.20" width="5.00" height="0.80" fill="#888" fill-opacity="0.7"/><rect x="53.00" y="2.00" width="1.30" height="1.30" fill="#70ad47" fill-opacity="1"/><rect x="55.20" y="2.20" width="5.00" height="0.80" fill="#888" fill-opacity="0.7"/><rect x="62.20" y="2.00" width="1.30" height="1.30" fill="#264478" fill-opacity="1"/><rect x="64.40" y="2.20" width="5.00" height="0.80" fill="#888" fill-opacity="0.7"/><rect x="71.40" y="2.00" width="1.30" height="1.30" fill="#9e480e" fill-opacity="1"/><rect x="73.60" y="2.20" width="5.00" height="0.80" fill="#888" fill-opacity="0.7"/></svg>
<svg style="position:absolute;left:452px;top:83.8px;" width="80" height="34" viewBox="0 0 80 34"><defs><radialGradient id="g4" cx="50%" cy="45%" r="65%"><stop offset="0" stop-color="#ffffff"/><stop offset="0.6" stop-color="#f0f0f0"/><stop offset="1" stop-color="#cdcdcd"/></radialGradient></defs><rect x="0.00" y="0.00" width="80.00" height="34.00" fill="url(#g4)" fill-opacity="1"/><rect x="2.00" y="3.00" width="76.00" height="0.70" fill="#ffffff" fill-opacity="0.9"/><rect x="2.00" y="5.40" width="76.00" height="0.70" fill="#ffffff" fill-opacity="0.9"/><rect x="2.00" y="7.80" width="76.00" height="0.70" fill="#ffffff" fill-opacity="0.9"/><rect x="2.00" y="10.20" width="76.00" height="0.70" fill="#ffffff" fill-opacity="0.9"/><rect x="2.00" y="12.60" width="76.00" height="0.70" fill="#ffffff" fill-opacity="0.9"/><rect x="2.00" y="15.00" width="76.00" height="0.70" fill="#ffffff" fill-opacity="0.9"/><rect x="2.00" y="17.40" width="76.00" height="0.70" fill="#ffffff" fill-opacity="0.9"/><rect x="2.00" y="19.80" width="76.00" height="0.70" fill="#ffffff" fill-opacity="0.9"/><rect x="2.00" y="22.20" width="76.00" height="0.70" fill="#ffffff" fill-opacity="0.9"/><rect x="2.00" y="24.60" width="76.00" height="0.70" fill="#ffffff" fill-opacity="0.9"/><rect x="1.50" y="26.20" width="77.00" height="1.20" fill="#222" fill-opacity="1"/><rect x="3.00" y="30.30" width="74.00" height="2.00" fill="#e0e0e0" fill-opacity="1"/><rect x="3.80" y="19.43" width="3.80" height="5.97" fill="#4472c4" fill-opacity="0.55"/><rect x="3.80" y="16.42" width="3.80" height="1.81" fill="#ed7d31" fill-opacity="0.55"/><rect x="3.80" y="14.66" width="3.80" height="0.56" fill="#a5a5a5" fill-opacity="0.55"/><rect x="3.80" y="11.61" width="3.80" height="1.86" fill="#ffc000" fill-opacity="0.55"/><rect x="3.80" y="9.40" width="3.80" height="1.01" fill="#5b9bd5" fill-opacity="0.55"/><rect x="3.80" y="7.80" width="3.80" height="0.40" fill="#70ad47" fill-opacity="0.55"/><rect x="3.80" y="4.70" width="3.80" height="1.90" fill="#264478" fill-opacity="0.55"/><rect x="3.80" y="3.22" width="3.80" height="0.28" fill="#9e480e" fill-opacity="0.55"/><rect x="2.50" y="28.20" width="6.40" height="0.80" fill="#666" fill-opacity="0.7"/><rect x="12.50" y="19.43" width="3.80" height="5.97" fill="#4472c4" fill-opacity="0.55"/><rect x="12.50" y="16.42" width="3.80" height="1.81" fill="#ed7d31" fill-opacity="0.55"/><rect x="12.50" y="14.66" width="3.80" height="0.56" fill="#a5a5a5" fill-opacity="0.55"/><rect x="12.50" y="11.61" width="3.80" height="1.86" fill="#ffc000" fill-opacity="0.55"/><rect x="12.50" y="9.40" width="3.80" height="1.01" fill="#5b9bd5" fill-opacity="0.55"/><rect x="12.50" y="7.80" width="3.80" height="0.40" fill="#70ad47" fill-opacity="0.55"/><rect x="12.50" y="4.70" width="3.80" height="1.90" fill="#264478" fill-opacity="0.55"/><rect x="12.50" y="3.22" width="3.80" height="0.28" fill="#9e480e" fill-opacity="0.55"/><rect x="11.20" y="28.20" width="6.40" height="0.80" fill="#666" fill-opacity="0.7"/><rect x="21.20" y="19.43" width="3.80" height="5.97" fill="#4472c4" fill-opacity="0.55"/><rect x="21.20" y="16.42" width="3.80" height="1.81" fill="#ed7d31" fill-opacity="0.55"/><rect x="21.20" y="14.66" width="3.80" height="0.56" fill="#a5a5a5" fill-opacity="0.55"/><rect x="21.20" y="11.61" width="3.80" height="1.86" fill="#ffc000" fill-opacity="0.55"/><rect x="21.20" y="9.40" width="3.80" height="1.01" fill="#5b9bd5" fill-opacity="0.55"/><rect x="21.20" y="7.80" width="3.80" height="0.40" fill="#70ad47" fill-opacity="0.55"/><rect x="21.20" y="4.70" width="3.80" height="1.90" fill="#264478" fill-opacity="0.55"/><rect x="21.20" y="3.22" width="3.80" height="0.28" fill="#9e480e" fill-opacity="0.55"/><rect x="19.90" y="28.20" width="6.40" height="0.80" fill="#666" fill-opacity="0.7"/><rect x="29.90" y="19.43" width="3.80" height="5.97" fill="#4472c4" fill-opacity="0.55"/><rect x="29.90" y="16.42" width="3.80" height="1.81" fill="#ed7d31" fill-opacity="0.55"/><rect x="29.90" y="14.66" width="3.80" height="0.56" fill="#a5a5a5" fill-opacity="0.55"/><rect x="29.90" y="11.61" width="3.80" height="1.86" fill="#ffc000" fill-opacity="0.55"/><rect x="29.90" y="9.40" width="3.80" height="1.01" fill="#5b9bd5" fill-opacity="0.55"/><rect x="29.90" y="7.80" width="3.80" height="0.40" fill="#70ad47" fill-opacity="0.55"/><rect x="29.90" y="4.70" width="3.80" height="1.90" fill="#264478" fill-opacity="0.55"/><rect x="29.90" y="3.22" width="3.80" height="0.28" fill="#9e480e" fill-opacity="0.55"/><rect x="28.60" y="28.20" width="6.40" height="0.80" fill="#666" fill-opacity="0.7"/><rect x="38.60" y="19.43" width="3.80" height="5.97" fill="#4472c4" fill-opacity="0.55"/><rect x="38.60" y="16.42" width="3.80" height="1.81" fill="#ed7d31" fill-opacity="0.55"/><rect x="38.60" y="14.66" width="3.80" height="0.56" fill="#a5a5a5" fill-opacity="0.55"/><rect x="38.60" y="11.61" width="3.80" height="1.86" fill="#ffc000" fill-opacity="0.55"/><rect x="38.60" y="9.40" width="3.80" height="1.01" fill="#5b9bd5" fill-opacity="0.55"/><rect x="38.60" y="7.80" width="3.80" height="0.40" fill="#70ad47" fill-opacity="0.55"/><rect x="38.60" y="4.70" width="3.80" height="1.90" fill="#264478" fill-opacity="0.55"/><rect x="38.60" y="3.22" width="3.80" height="0.28" fill="#9e480e" fill-opacity="0.55"/><rect x="37.30" y="28.20" width="6.40" height="0.80" fill="#666" fill-opacity="0.7"/><rect x="47.30" y="19.43" width="3.80" height="5.97" fill="#4472c4" fill-opacity="0.55"/><rect x="47.30" y="16.42" width="3.80" height="1.81" fill="#ed7d31" fill-opacity="0.55"/><rect x="47.30" y="14.66" width="3.80" height="0.56" fill="#a5a5a5" fill-opacity="0.55"/><rect x="47.30" y="11.61" width="3.80" height="1.86" fill="#ffc000" fill-opacity="0.55"/><rect x="47.30" y="9.40" width="3.80" height="1.01" fill="#5b9bd5" fill-opacity="0.55"/><rect x="47.30" y="7.80" width="3.80" height="0.40" fill="#70ad47" fill-opacity="0.55"/><rect x="47.30" y="4.70" width="3.80" height="1.90" fill="#264478" fill-opacity="0.55"/><rect x="47.30" y="3.22" width="3.80" height="0.28" fill="#9e480e" fill-opacity="0.55"/><rect x="46.00" y="28.20" width="6.40" height="0.80" fill="#666" fill-opacity="0.7"/><rect x="56.00" y="19.43" width="3.80" height="5.97" fill="#4472c4" fill-opacity="0.55"/><rect x="56.00" y="16.42" width="3.80" height="1.81" fill="#ed7d31" fill-opacity="0.55"/><rect x="56.00" y="14.66" width="3.80" height="0.56" fill="#a5a5a5" fill-opacity="0.55"/><rect x="56.00" y="11.61" width="3.80" height="1.86" fill="#ffc000" fill-opacity="0.55"/><rect x="56.00" y="9.40" width="3.80" height="1.01" fill="#5b9bd5" fill-opacity="0.55"/><rect x="56.00" y="7.80" width="3.80" height="0.40" fill="#70ad47" fill-opacity="0.55"/><rect x="56.00" y="4.70" width="3.80" height="1.90" fill="#264478" fill-opacity="0.55"/><rect x="56.00" y="3.22" width="3.80" height="0.28" fill="#9e480e" fill-opacity="0.55"/><rect x="54.70" y="28.20" width="6.40" height="0.80" fill="#666" fill-opacity="0.7"/><rect x="64.70" y="19.43" width="3.80" height="5.97" fill="#4472c4" fill-opacity="0.55"/><rect x="64.70" y="16.42" width="3.80" height="1.81" fill="#ed7d31" fill-opacity="0.55"/><rect x="64.70" y="14.66" width="3.80" height="0.56" fill="#a5a5a5" fill-opacity="0.55"/><rect x="64.70" y="11.61" width="3.80" height="1.86" fill="#ffc000" fill-opacity="0.55"/><rect x="64.70" y="9.40" width="3.80" height="1.01" fill="#5b9bd5" fill-opacity="0.55"/><rect x="64.70" y="7.80" width="3.80" height="0.40" fill="#70ad47" fill-opacity="0.55"/><rect x="64.70" y="4.70" width="3.80" height="1.90" fill="#264478" fill-opacity="0.55"/><rect x="64.70" y="3.22" width="3.80" height="0.28" fill="#9e480e" fill-opacity="0.55"/><rect x="63.40" y="28.20" width="6.40" height="0.80" fill="#666" fill-opacity="0.7"/><rect x="73.40" y="19.43" width="3.80" height="5.97" fill="#4472c4" fill-opacity="0.55"/><rect x="73.40" y="16.42" width="3.80" height="1.81" fill="#ed7d31" fill-opacity="0.55"/><rect x="73.40" y="14.66" width="3.80" height="0.56" fill="#a5a5a5" fill-opacity="0.55"/><rect x="73.40" y="11.61" width="3.80" height="1.86" fill="#ffc000" fill-opacity="0.55"/><rect x="73.40" y="9.40" width="3.80" height="1.01" fill="#5b9bd5" fill-opacity="0.55"/><rect x="73.40" y="7.80" width="3.80" height="0.40" fill="#70ad47" fill-opacity="0.55"/><rect x="73.40" y="4.70" width="3.80" height="1.90" fill="#264478" fill-opacity="0.55"/><rect x="73.40" y="3.22" width="3.80" height="0.28" fill="#9e480e" fill-opacity="0.55"/><rect x="72.10" y="28.20" width="6.40" height="0.80" fill="#666" fill-opacity="0.7"/><rect x="7.00" y="30.70" width="1.30" height="1.30" fill="#4472c4" fill-opacity="1"/><rect x="9.20" y="30.90" width="5.00" height="0.80" fill="#888" fill-opacity="0.7"/><rect x="16.20" y="30.70" width="1.30" height="1.30" fill="#ed7d31" fill-opacity="1"/><rect x="18.40" y="30.90" width="5.00" height="0.80" fill="#888" fill-opacity="0.7"/><rect x="25.40" y="30.70" width="1.30" height="1.30" fill="#a5a5a5" fill-opacity="1"/><rect x="27.60" y="30.90" width="5.00" height="0.80" fill="#888" fill-opacity="0.7"/><rect x="34.60" y="30.70" width="1.30" height="1.30" fill="#ffc000" fill-opacity="1"/><rect x="36.80" y="30.90" width="5.00" height="0.80" fill="#888" fill-opacity="0.7"/><rect x="43.80" y="30.70" width="1.30" height="1.30" fill="#5b9bd5" fill-opacity="1"/><rect x="46.00" y="30.90" width="5.00" height="0.80" fill="#888" fill-opacity="0.7"/><rect x="53.00" y="30.70" width="1.30" height="1.30" fill="#70ad47" fill-opacity="1"/><rect x="55.20" y="30.90" width="5.00" height="0.80" fill="#888" fill-opacity="0.7"/><rect x="62.20" y="30.70" width="1.30" height="1.30" fill="#264478" fill-opacity="1"/><rect x="64.40" y="30.90" width="5.00" height="0.80" fill="#888" fill-opacity="0.7"/><rect x="71.40" y="30.70" width="1.30" height="1.30" fill="#9e480e" fill-opacity="1"/><rect x="73.60" y="30.90" width="5.00" height="0.80" fill="#888" fill-opacity="0.7"/></svg>
<svg style="position:absolute;left:540px;top:83.8px;" width="80" height="34" viewBox="0 0 80 34"><rect x="0.5" y="0.5" width="79" height="33" fill="#fff" stroke="#d0d0d0"/><rect x="10.00" y="2.30" width="69.00" height="1.00" fill="#e6e6e6" fill-opacity="1"/><rect x="1.50" y="2.30" width="6.50" height="0.90" fill="#7a7a7a" fill-opacity="0.8"/><rect x="1.50" y="4.70" width="6.50" height="0.90" fill="#7a7a7a" fill-opacity="0.8"/><rect x="1.50" y="7.10" width="6.50" height="0.90" fill="#7a7a7a" fill-opacity="0.8"/><rect x="1.50" y="9.50" width="6.50" height="0.90" fill="#7a7a7a" fill-opacity="0.8"/><rect x="1.50" y="11.90" width="6.50" height="0.90" fill="#7a7a7a" fill-opacity="0.8"/><rect x="1.50" y="14.30" width="6.50" height="0.90" fill="#7a7a7a" fill-opacity="0.8"/><rect x="1.50" y="16.70" width="6.50" height="0.90" fill="#7a7a7a" fill-opacity="0.8"/><rect x="1.50" y="19.10" width="6.50" height="0.90" fill="#7a7a7a" fill-opacity="0.8"/><rect x="1.50" y="21.50" width="6.50" height="0.90" fill="#7a7a7a" fill-opacity="0.8"/><rect x="1.50" y="23.90" width="6.50" height="0.90" fill="#7a7a7a" fill-opacity="0.8"/><rect x="10.00" y="4.30" width="69.00" height="0.60" fill="#dcdcdc" fill-opacity="1"/><rect x="10.00" y="6.70" width="69.00" height="0.60" fill="#dcdcdc" fill-opacity="1"/><rect x="10.00" y="9.10" width="69.00" height="0.60" fill="#dcdcdc" fill-opacity="1"/><rect x="10.00" y="11.50" width="69.00" height="0.60" fill="#dcdcdc" fill-opacity="1"/><rect x="10.00" y="13.90" width="69.00" height="0.60" fill="#dcdcdc" fill-opacity="1"/><rect x="10.00" y="16.30" width="69.00" height="0.60" fill="#dcdcdc" fill-opacity="1"/><rect x="10.00" y="18.70" width="69.00" height="0.60" fill="#dcdcdc" fill-opacity="1"/><rect x="10.00" y="21.10" width="69.00" height="0.60" fill="#dcdcdc" fill-opacity="1"/><rect x="10.00" y="23.50" width="69.00" height="0.60" fill="#dcdcdc" fill-opacity="1"/><rect x="10.00" y="25.90" width="69.00" height="0.60" fill="#dcdcdc" fill-opacity="1"/><rect x="11.00" y="19.28" width="4.30" height="6.62" fill="#4472c4" fill-opacity="1"/><rect x="11.00" y="16.50" width="4.30" height="2.78" fill="#ed7d31" fill-opacity="1"/><rect x="11.00" y="14.88" width="4.30" height="1.63" fill="#a5a5a5" fill-opacity="1"/><rect x="11.00" y="12.06" width="4.30" height="2.82" fill="#ffc000" fill-opacity="1"/><rect x="11.00" y="10.02" width="4.30" height="2.04" fill="#5b9bd5" fill-opacity="1"/><rect x="11.00" y="8.54" width="4.30" height="1.48" fill="#70ad47" fill-opacity="1"/><rect x="11.00" y="5.68" width="4.30" height="2.86" fill="#264478" fill-opacity="1"/><rect x="11.00" y="4.31" width="4.30" height="1.37" fill="#9e480e" fill-opacity="1"/><rect x="10.50" y="27.10" width="5.30" height="0.80" fill="#666" fill-opacity="0.7"/><rect x="18.75" y="19.28" width="4.30" height="6.62" fill="#4472c4" fill-opacity="1"/><rect x="18.75" y="16.50" width="4.30" height="2.78" fill="#ed7d31" fill-opacity="1"/><rect x="18.75" y="14.88" width="4.30" height="1.63" fill="#a5a5a5" fill-opacity="1"/><rect x="18.75" y="12.06" width="4.30" height="2.82" fill="#ffc000" fill-opacity="1"/><rect x="18.75" y="10.02" width="4.30" height="2.04" fill="#5b9bd5" fill-opacity="1"/><rect x="18.75" y="8.54" width="4.30" height="1.48" fill="#70ad47" fill-opacity="1"/><rect x="18.75" y="5.68" width="4.30" height="2.86" fill="#264478" fill-opacity="1"/><rect x="18.75" y="4.31" width="4.30" height="1.37" fill="#9e480e" fill-opacity="1"/><rect x="18.25" y="27.10" width="5.30" height="0.80" fill="#666" fill-opacity="0.7"/><rect x="26.50" y="19.28" width="4.30" height="6.62" fill="#4472c4" fill-opacity="1"/><rect x="26.50" y="16.50" width="4.30" height="2.78" fill="#ed7d31" fill-opacity="1"/><rect x="26.50" y="14.88" width="4.30" height="1.63" fill="#a5a5a5" fill-opacity="1"/><rect x="26.50" y="12.06" width="4.30" height="2.82" fill="#ffc000" fill-opacity="1"/><rect x="26.50" y="10.02" width="4.30" height="2.04" fill="#5b9bd5" fill-opacity="1"/><rect x="26.50" y="8.54" width="4.30" height="1.48" fill="#70ad47" fill-opacity="1"/><rect x="26.50" y="5.68" width="4.30" height="2.86" fill="#264478" fill-opacity="1"/><rect x="26.50" y="4.31" width="4.30" height="1.37" fill="#9e480e" fill-opacity="1"/><rect x="26.00" y="27.10" width="5.30" height="0.80" fill="#666" fill-opacity="0.7"/><rect x="34.25" y="19.28" width="4.30" height="6.62" fill="#4472c4" fill-opacity="1"/><rect x="34.25" y="16.50" width="4.30" height="2.78" fill="#ed7d31" fill-opacity="1"/><rect x="34.25" y="14.88" width="4.30" height="1.63" fill="#a5a5a5" fill-opacity="1"/><rect x="34.25" y="12.06" width="4.30" height="2.82" fill="#ffc000" fill-opacity="1"/><rect x="34.25" y="10.02" width="4.30" height="2.04" fill="#5b9bd5" fill-opacity="1"/><rect x="34.25" y="8.54" width="4.30" height="1.48" fill="#70ad47" fill-opacity="1"/><rect x="34.25" y="5.68" width="4.30" height="2.86" fill="#264478" fill-opacity="1"/><rect x="34.25" y="4.31" width="4.30" height="1.37" fill="#9e480e" fill-opacity="1"/><rect x="33.75" y="27.10" width="5.30" height="0.80" fill="#666" fill-opacity="0.7"/><rect x="42.00" y="19.28" width="4.30" height="6.62" fill="#4472c4" fill-opacity="1"/><rect x="42.00" y="16.50" width="4.30" height="2.78" fill="#ed7d31" fill-opacity="1"/><rect x="42.00" y="14.88" width="4.30" height="1.63" fill="#a5a5a5" fill-opacity="1"/><rect x="42.00" y="12.06" width="4.30" height="2.82" fill="#ffc000" fill-opacity="1"/><rect x="42.00" y="10.02" width="4.30" height="2.04" fill="#5b9bd5" fill-opacity="1"/><rect x="42.00" y="8.54" width="4.30" height="1.48" fill="#70ad47" fill-opacity="1"/><rect x="42.00" y="5.68" width="4.30" height="2.86" fill="#264478" fill-opacity="1"/><rect x="42.00" y="4.31" width="4.30" height="1.37" fill="#9e480e" fill-opacity="1"/><rect x="41.50" y="27.10" width="5.30" height="0.80" fill="#666" fill-opacity="0.7"/><rect x="49.75" y="19.28" width="4.30" height="6.62" fill="#4472c4" fill-opacity="1"/><rect x="49.75" y="16.50" width="4.30" height="2.78" fill="#ed7d31" fill-opacity="1"/><rect x="49.75" y="14.88" width="4.30" height="1.63" fill="#a5a5a5" fill-opacity="1"/><rect x="49.75" y="12.06" width="4.30" height="2.82" fill="#ffc000" fill-opacity="1"/><rect x="49.75" y="10.02" width="4.30" height="2.04" fill="#5b9bd5" fill-opacity="1"/><rect x="49.75" y="8.54" width="4.30" height="1.48" fill="#70ad47" fill-opacity="1"/><rect x="49.75" y="5.68" width="4.30" height="2.86" fill="#264478" fill-opacity="1"/><rect x="49.75" y="4.31" width="4.30" height="1.37" fill="#9e480e" fill-opacity="1"/><rect x="49.25" y="27.10" width="5.30" height="0.80" fill="#666" fill-opacity="0.7"/><rect x="57.50" y="19.28" width="4.30" height="6.62" fill="#4472c4" fill-opacity="1"/><rect x="57.50" y="16.50" width="4.30" height="2.78" fill="#ed7d31" fill-opacity="1"/><rect x="57.50" y="14.88" width="4.30" height="1.63" fill="#a5a5a5" fill-opacity="1"/><rect x="57.50" y="12.06" width="4.30" height="2.82" fill="#ffc000" fill-opacity="1"/><rect x="57.50" y="10.02" width="4.30" height="2.04" fill="#5b9bd5" fill-opacity="1"/><rect x="57.50" y="8.54" width="4.30" height="1.48" fill="#70ad47" fill-opacity="1"/><rect x="57.50" y="5.68" width="4.30" height="2.86" fill="#264478" fill-opacity="1"/><rect x="57.50" y="4.31" width="4.30" height="1.37" fill="#9e480e" fill-opacity="1"/><rect x="57.00" y="27.10" width="5.30" height="0.80" fill="#666" fill-opacity="0.7"/><rect x="65.25" y="19.28" width="4.30" height="6.62" fill="#4472c4" fill-opacity="1"/><rect x="65.25" y="16.50" width="4.30" height="2.78" fill="#ed7d31" fill-opacity="1"/><rect x="65.25" y="14.88" width="4.30" height="1.63" fill="#a5a5a5" fill-opacity="1"/><rect x="65.25" y="12.06" width="4.30" height="2.82" fill="#ffc000" fill-opacity="1"/><rect x="65.25" y="10.02" width="4.30" height="2.04" fill="#5b9bd5" fill-opacity="1"/><rect x="65.25" y="8.54" width="4.30" height="1.48" fill="#70ad47" fill-opacity="1"/><rect x="65.25" y="5.68" width="4.30" height="2.86" fill="#264478" fill-opacity="1"/><rect x="65.25" y="4.31" width="4.30" height="1.37" fill="#9e480e" fill-opacity="1"/><rect x="64.75" y="27.10" width="5.30" height="0.80" fill="#666" fill-opacity="0.7"/><rect x="73.00" y="19.28" width="4.30" height="6.62" fill="#4472c4" fill-opacity="1"/><rect x="73.00" y="16.50" width="4.30" height="2.78" fill="#ed7d31" fill-opacity="1"/><rect x="73.00" y="14.88" width="4.30" height="1.63" fill="#a5a5a5" fill-opacity="1"/><rect x="73.00" y="12.06" width="4.30" height="2.82" fill="#ffc000" fill-opacity="1"/><rect x="73.00" y="10.02" width="4.30" height="2.04" fill="#5b9bd5" fill-opacity="1"/><rect x="73.00" y="8.54" width="4.30" height="1.48" fill="#70ad47" fill-opacity="1"/><rect x="73.00" y="5.68" width="4.30" height="2.86" fill="#264478" fill-opacity="1"/><rect x="73.00" y="4.31" width="4.30" height="1.37" fill="#9e480e" fill-opacity="1"/><rect x="72.50" y="27.10" width="5.30" height="0.80" fill="#666" fill-opacity="0.7"/><rect x="7.00" y="31.00" width="1.30" height="1.30" fill="#4472c4" fill-opacity="1"/><rect x="9.20" y="31.20" width="5.00" height="0.80" fill="#888" fill-opacity="0.7"/><rect x="16.20" y="31.00" width="1.30" height="1.30" fill="#ed7d31" fill-opacity="1"/><rect x="18.40" y="31.20" width="5.00" height="0.80" fill="#888" fill-opacity="0.7"/><rect x="25.40" y="31.00" width="1.30" height="1.30" fill="#a5a5a5" fill-opacity="1"/><rect x="27.60" y="31.20" width="5.00" height="0.80" fill="#888" fill-opacity="0.7"/><rect x="34.60" y="31.00" width="1.30" height="1.30" fill="#ffc000" fill-opacity="1"/><rect x="36.80" y="31.20" width="5.00" height="0.80" fill="#888" fill-opacity="0.7"/><rect x="43.80" y="31.00" width="1.30" height="1.30" fill="#5b9bd5" fill-opacity="1"/><rect x="46.00" y="31.20" width="5.00" height="0.80" fill="#888" fill-opacity="0.7"/><rect x="53.00" y="31.00" width="1.30" height="1.30" fill="#70ad47" fill-opacity="1"/><rect x="55.20" y="31.20" width="5.00" height="0.80" fill="#888" fill-opacity="0.7"/><rect x="62.20" y="31.00" width="1.30" height="1.30" fill="#264478" fill-opacity="1"/><rect x="64.40" y="31.20" width="5.00" height="0.80" fill="#888" fill-opacity="0.7"/><rect x="71.40" y="31.00" width="1.30" height="1.30" fill="#9e480e" fill-opacity="1"/><rect x="73.60" y="31.20" width="5.00" height="0.80" fill="#888" fill-opacity="0.7"/></svg>
<svg style="position:absolute;left:628px;top:83.8px;" width="80" height="34" viewBox="0 0 80 34"><rect x="0.5" y="0.5" width="79" height="33" fill="#fff" stroke="#cfd8e6"/><rect x="10.00" y="2.30" width="69.00" height="0.70" fill="#dde4ee" fill-opacity="1"/><rect x="1.50" y="2.30" width="6.50" height="0.90" fill="#2f3f5e" fill-opacity="0.85"/><rect x="1.50" y="4.70" width="6.50" height="0.90" fill="#2f3f5e" fill-opacity="0.85"/><rect x="1.50" y="7.10" width="6.50" height="0.90" fill="#2f3f5e" fill-opacity="0.85"/><rect x="1.50" y="9.50" width="6.50" height="0.90" fill="#2f3f5e" fill-opacity="0.85"/><rect x="1.50" y="11.90" width="6.50" height="0.90" fill="#2f3f5e" fill-opacity="0.85"/><rect x="1.50" y="14.30" width="6.50" height="0.90" fill="#2f3f5e" fill-opacity="0.85"/><rect x="1.50" y="16.70" width="6.50" height="0.90" fill="#2f3f5e" fill-opacity="0.85"/><rect x="1.50" y="19.10" width="6.50" height="0.90" fill="#2f3f5e" fill-opacity="0.85"/><rect x="1.50" y="21.50" width="6.50" height="0.90" fill="#2f3f5e" fill-opacity="0.85"/><rect x="1.50" y="23.90" width="6.50" height="0.90" fill="#2f3f5e" fill-opacity="0.85"/><rect x="10.00" y="4.60" width="69.00" height="0.60" fill="#dfe5ee" fill-opacity="1"/><rect x="10.00" y="7.00" width="69.00" height="0.60" fill="#dfe5ee" fill-opacity="1"/><rect x="10.00" y="9.40" width="69.00" height="0.60" fill="#dfe5ee" fill-opacity="1"/><rect x="10.00" y="11.80" width="69.00" height="0.60" fill="#dfe5ee" fill-opacity="1"/><rect x="10.00" y="14.20" width="69.00" height="0.60" fill="#dfe5ee" fill-opacity="1"/><rect x="10.00" y="16.60" width="69.00" height="0.60" fill="#dfe5ee" fill-opacity="1"/><rect x="10.00" y="19.00" width="69.00" height="0.60" fill="#dfe5ee" fill-opacity="1"/><rect x="10.00" y="21.40" width="69.00" height="0.60" fill="#dfe5ee" fill-opacity="1"/><rect x="10.00" y="23.80" width="69.00" height="0.60" fill="#dfe5ee" fill-opacity="1"/><rect x="10.00" y="26.20" width="69.00" height="0.60" fill="#dfe5ee" fill-opacity="1"/><rect x="11.40" y="19.53" width="4.20" height="6.37" fill="#4472c4" fill-opacity="1"/><rect x="11.40" y="16.85" width="4.20" height="2.68" fill="#ed7d31" fill-opacity="1"/><rect x="11.40" y="15.28" width="4.20" height="1.57" fill="#a5a5a5" fill-opacity="1"/><rect x="11.40" y="12.57" width="4.20" height="2.72" fill="#ffc000" fill-opacity="1"/><rect x="11.40" y="10.60" width="4.20" height="1.96" fill="#5b9bd5" fill-opacity="1"/><rect x="11.40" y="9.18" width="4.20" height="1.42" fill="#70ad47" fill-opacity="1"/><rect x="11.40" y="6.42" width="4.20" height="2.76" fill="#264478" fill-opacity="1"/><rect x="11.40" y="5.10" width="4.20" height="1.32" fill="#9e480e" fill-opacity="1"/><rect x="10.90" y="27.10" width="5.20" height="0.80" fill="#666" fill-opacity="0.7"/><rect x="19.12" y="19.53" width="4.20" height="6.37" fill="#4472c4" fill-opacity="1"/><rect x="19.12" y="16.85" width="4.20" height="2.68" fill="#ed7d31" fill-opacity="1"/><rect x="19.12" y="15.28" width="4.20" height="1.57" fill="#a5a5a5" fill-opacity="1"/><rect x="19.12" y="12.57" width="4.20" height="2.72" fill="#ffc000" fill-opacity="1"/><rect x="19.12" y="10.60" width="4.20" height="1.96" fill="#5b9bd5" fill-opacity="1"/><rect x="19.12" y="9.18" width="4.20" height="1.42" fill="#70ad47" fill-opacity="1"/><rect x="19.12" y="6.42" width="4.20" height="2.76" fill="#264478" fill-opacity="1"/><rect x="19.12" y="5.10" width="4.20" height="1.32" fill="#9e480e" fill-opacity="1"/><rect x="18.62" y="27.10" width="5.20" height="0.80" fill="#666" fill-opacity="0.7"/><rect x="26.84" y="19.53" width="4.20" height="6.37" fill="#4472c4" fill-opacity="1"/><rect x="26.84" y="16.85" width="4.20" height="2.68" fill="#ed7d31" fill-opacity="1"/><rect x="26.84" y="15.28" width="4.20" height="1.57" fill="#a5a5a5" fill-opacity="1"/><rect x="26.84" y="12.57" width="4.20" height="2.72" fill="#ffc000" fill-opacity="1"/><rect x="26.84" y="10.60" width="4.20" height="1.96" fill="#5b9bd5" fill-opacity="1"/><rect x="26.84" y="9.18" width="4.20" height="1.42" fill="#70ad47" fill-opacity="1"/><rect x="26.84" y="6.42" width="4.20" height="2.76" fill="#264478" fill-opacity="1"/><rect x="26.84" y="5.10" width="4.20" height="1.32" fill="#9e480e" fill-opacity="1"/><rect x="26.34" y="27.10" width="5.20" height="0.80" fill="#666" fill-opacity="0.7"/><rect x="34.56" y="19.53" width="4.20" height="6.37" fill="#4472c4" fill-opacity="1"/><rect x="34.56" y="16.85" width="4.20" height="2.68" fill="#ed7d31" fill-opacity="1"/><rect x="34.56" y="15.28" width="4.20" height="1.57" fill="#a5a5a5" fill-opacity="1"/><rect x="34.56" y="12.57" width="4.20" height="2.72" fill="#ffc000" fill-opacity="1"/><rect x="34.56" y="10.60" width="4.20" height="1.96" fill="#5b9bd5" fill-opacity="1"/><rect x="34.56" y="9.18" width="4.20" height="1.42" fill="#70ad47" fill-opacity="1"/><rect x="34.56" y="6.42" width="4.20" height="2.76" fill="#264478" fill-opacity="1"/><rect x="34.56" y="5.10" width="4.20" height="1.32" fill="#9e480e" fill-opacity="1"/><rect x="34.06" y="27.10" width="5.20" height="0.80" fill="#666" fill-opacity="0.7"/><rect x="42.28" y="19.53" width="4.20" height="6.37" fill="#4472c4" fill-opacity="1"/><rect x="42.28" y="16.85" width="4.20" height="2.68" fill="#ed7d31" fill-opacity="1"/><rect x="42.28" y="15.28" width="4.20" height="1.57" fill="#a5a5a5" fill-opacity="1"/><rect x="42.28" y="12.57" width="4.20" height="2.72" fill="#ffc000" fill-opacity="1"/><rect x="42.28" y="10.60" width="4.20" height="1.96" fill="#5b9bd5" fill-opacity="1"/><rect x="42.28" y="9.18" width="4.20" height="1.42" fill="#70ad47" fill-opacity="1"/><rect x="42.28" y="6.42" width="4.20" height="2.76" fill="#264478" fill-opacity="1"/><rect x="42.28" y="5.10" width="4.20" height="1.32" fill="#9e480e" fill-opacity="1"/><rect x="41.78" y="27.10" width="5.20" height="0.80" fill="#666" fill-opacity="0.7"/><rect x="50.00" y="19.53" width="4.20" height="6.37" fill="#4472c4" fill-opacity="1"/><rect x="50.00" y="16.85" width="4.20" height="2.68" fill="#ed7d31" fill-opacity="1"/><rect x="50.00" y="15.28" width="4.20" height="1.57" fill="#a5a5a5" fill-opacity="1"/><rect x="50.00" y="12.57" width="4.20" height="2.72" fill="#ffc000" fill-opacity="1"/><rect x="50.00" y="10.60" width="4.20" height="1.96" fill="#5b9bd5" fill-opacity="1"/><rect x="50.00" y="9.18" width="4.20" height="1.42" fill="#70ad47" fill-opacity="1"/><rect x="50.00" y="6.42" width="4.20" height="2.76" fill="#264478" fill-opacity="1"/><rect x="50.00" y="5.10" width="4.20" height="1.32" fill="#9e480e" fill-opacity="1"/><rect x="49.50" y="27.10" width="5.20" height="0.80" fill="#666" fill-opacity="0.7"/><rect x="57.72" y="19.53" width="4.20" height="6.37" fill="#4472c4" fill-opacity="1"/><rect x="57.72" y="16.85" width="4.20" height="2.68" fill="#ed7d31" fill-opacity="1"/><rect x="57.72" y="15.28" width="4.20" height="1.57" fill="#a5a5a5" fill-opacity="1"/><rect x="57.72" y="12.57" width="4.20" height="2.72" fill="#ffc000" fill-opacity="1"/><rect x="57.72" y="10.60" width="4.20" height="1.96" fill="#5b9bd5" fill-opacity="1"/><rect x="57.72" y="9.18" width="4.20" height="1.42" fill="#70ad47" fill-opacity="1"/><rect x="57.72" y="6.42" width="4.20" height="2.76" fill="#264478" fill-opacity="1"/><rect x="57.72" y="5.10" width="4.20" height="1.32" fill="#9e480e" fill-opacity="1"/><rect x="57.22" y="27.10" width="5.20" height="0.80" fill="#666" fill-opacity="0.7"/><rect x="65.44" y="19.53" width="4.20" height="6.37" fill="#4472c4" fill-opacity="1"/><rect x="65.44" y="16.85" width="4.20" height="2.68" fill="#ed7d31" fill-opacity="1"/><rect x="65.44" y="15.28" width="4.20" height="1.57" fill="#a5a5a5" fill-opacity="1"/><rect x="65.44" y="12.57" width="4.20" height="2.72" fill="#ffc000" fill-opacity="1"/><rect x="65.44" y="10.60" width="4.20" height="1.96" fill="#5b9bd5" fill-opacity="1"/><rect x="65.44" y="9.18" width="4.20" height="1.42" fill="#70ad47" fill-opacity="1"/><rect x="65.44" y="6.42" width="4.20" height="2.76" fill="#264478" fill-opacity="1"/><rect x="65.44" y="5.10" width="4.20" height="1.32" fill="#9e480e" fill-opacity="1"/><rect x="64.94" y="27.10" width="5.20" height="0.80" fill="#666" fill-opacity="0.7"/><rect x="73.16" y="19.53" width="4.20" height="6.37" fill="#4472c4" fill-opacity="1"/><rect x="73.16" y="16.85" width="4.20" height="2.68" fill="#ed7d31" fill-opacity="1"/><rect x="73.16" y="15.28" width="4.20" height="1.57" fill="#a5a5a5" fill-opacity="1"/><rect x="73.16" y="12.57" width="4.20" height="2.72" fill="#ffc000" fill-opacity="1"/><rect x="73.16" y="10.60" width="4.20" height="1.96" fill="#5b9bd5" fill-opacity="1"/><rect x="73.16" y="9.18" width="4.20" height="1.42" fill="#70ad47" fill-opacity="1"/><rect x="73.16" y="6.42" width="4.20" height="2.76" fill="#264478" fill-opacity="1"/><rect x="73.16" y="5.10" width="4.20" height="1.32" fill="#9e480e" fill-opacity="1"/><rect x="72.66" y="27.10" width="5.20" height="0.80" fill="#666" fill-opacity="0.7"/><rect x="7.00" y="31.00" width="1.30" height="1.30" fill="#4472c4" fill-opacity="1"/><rect x="9.20" y="31.20" width="5.00" height="0.80" fill="#888" fill-opacity="0.7"/><rect x="16.20" y="31.00" width="1.30" height="1.30" fill="#ed7d31" fill-opacity="1"/><rect x="18.40" y="31.20" width="5.00" height="0.80" fill="#888" fill-opacity="0.7"/><rect x="25.40" y="31.00" width="1.30" height="1.30" fill="#a5a5a5" fill-opacity="1"/><rect x="27.60" y="31.20" width="5.00" height="0.80" fill="#888" fill-opacity="0.7"/><rect x="34.60" y="31.00" width="1.30" height="1.30" fill="#ffc000" fill-opacity="1"/><rect x="36.80" y="31.20" width="5.00" height="0.80" fill="#888" fill-opacity="0.7"/><rect x="43.80" y="31.00" width="1.30" height="1.30" fill="#5b9bd5" fill-opacity="1"/><rect x="46.00" y="31.20" width="5.00" height="0.80" fill="#888" fill-opacity="0.7"/><rect x="53.00" y="31.00" width="1.30" height="1.30" fill="#70ad47" fill-opacity="1"/><rect x="55.20" y="31.20" width="5.00" height="0.80" fill="#888" fill-opacity="0.7"/><rect x="62.20" y="31.00" width="1.30" height="1.30" fill="#264478" fill-opacity="1"/><rect x="64.40" y="31.20" width="5.00" height="0.80" fill="#888" fill-opacity="0.7"/><rect x="71.40" y="31.00" width="1.30" height="1.30" fill="#9e480e" fill-opacity="1"/><rect x="73.60" y="31.20" width="5.00" height="0.80" fill="#888" fill-opacity="0.7"/></svg>
<div style="left:713px;top:71px;width:15px;height:21px;background:#f3f3f3;border:1px solid #d2d0ce;box-sizing:border-box"></div>
<svg style="position:absolute;left:716px;top:78px;" width="9" height="6" viewBox="0 0 9 6"><path d="M1 5 L4.5 1.5 L8 5" fill="none" stroke="#bbb" stroke-width="1.1"/></svg>
<div style="left:713px;top:92px;width:15px;height:19px;background:#fff;border:1px solid #c8c6c4;box-sizing:border-box"></div>
<svg style="position:absolute;left:716px;top:99px;" width="9" height="6" viewBox="0 0 9 6"><path d="M1 1 L4.5 4.5 L8 1" fill="none" stroke="#333" stroke-width="1.2"/></svg>
<div style="left:713px;top:111px;width:15px;height:20px;background:#fff;border:1px solid #c8c6c4;box-sizing:border-box"></div>
<svg style="position:absolute;left:716px;top:116px;" width="9" height="9" viewBox="0 0 9 9"><path d="M1 1 H8" stroke="#333" stroke-width="1.1"/><path d="M1 4 L4.5 7.5 L8 4" fill="none" stroke="#333" stroke-width="1.2"/></svg>
<svg style="position:absolute;left:752px;top:70px;" width="34" height="30" viewBox="0 0 34 30"><rect x="4.5" y="6.5" width="27" height="21" fill="#fafafa"/><path d="M4.5 17.5 L16.5 6.5 H31.5 V13.5 H13.5 V27.5 H4.5Z" fill="#83bbed"/><path d="M22.5 13.5 V27.5 M13.5 20.5 H31.5" stroke="#666" stroke-width="1"/><path d="M13.5 13.5 V27.5 M22.5 6.5 V13.5 M13.5 13.5 H31.5 M4.5 20.5 H13.5" stroke="#1a6fc4" stroke-width="1"/><path d="M16.5 6.5 H31.5 V27.5 H4.5 V17.5" fill="none" stroke="#333" stroke-width="1.1"/><path d="M4 18 L17 6" stroke="#fff" stroke-width="2.2"/><path d="M6.5 15.5 V5.5 H17" fill="none" stroke="#333" stroke-width="1.1"/><path d="M2.5 11.5 L6.5 15.5 L10.5 11.5 M13 1.5 L17 5.5 L13 9.5" fill="none" stroke="#333" stroke-width="1.1"/></svg>
<svg style="position:absolute;left:799px;top:73px;" width="32" height="31" viewBox="0 0 32 31"><rect x="0.5" y="3.5" width="27" height="21" fill="#fafafa" stroke="#333" stroke-width="1"/><rect x="0.5" y="3.5" width="18" height="14" fill="#83bbed"/><path d="M0.5 10.5 H27.5 M0.5 17.5 H27.5 M9.5 3.5 V24.5 M18.5 3.5 V24.5" stroke="#333" stroke-width="1"/><rect x="15.5" y="19.5" width="5" height="9" fill="#c8c8c8" stroke="#666"/><rect x="20.5" y="14.5" width="5.5" height="14" fill="#fafafa" stroke="#333"/><rect x="26" y="17.5" width="4.5" height="11" fill="#83bbed" stroke="#1c6bbd"/></svg>
<div style="left:749.8px;top:104.4px;height:20px;line-height:20px;font-size:12px;color:#333;letter-spacing:0.05px;">行/列の</div>
<div style="left:749.8px;top:118.4px;height:20px;line-height:20px;font-size:12px;color:#333;letter-spacing:-2.60px;">切り替え</div>
<div style="left:795.1px;top:104.4px;height:20px;line-height:20px;font-size:12px;color:#333;letter-spacing:-3.37px;">データの</div>
<div style="left:802.3px;top:118.4px;height:20px;line-height:20px;font-size:12px;color:#333;letter-spacing:-0.30px;">選択</div>
<svg style="position:absolute;left:870px;top:72px;" width="28" height="30" viewBox="0 0 28 30"><rect x="1.5" y="12.5" width="8" height="16" fill="#c8c8c8" stroke="#777"/><rect x="9.5" y="1.5" width="8" height="27" fill="#fafafa" stroke="#333"/><rect x="17.5" y="6.5" width="8" height="22" fill="#83bbed" stroke="#1c6bbd"/></svg>
<div style="left:854px;top:104.4px;height:20px;line-height:20px;font-size:12px;color:#333;letter-spacing:-2.54px;">グラフの種類</div>
<div style="left:866.7px;top:118.4px;height:20px;line-height:20px;font-size:12px;color:#333;letter-spacing:-0.85px;">の変更</div>
<svg style="position:absolute;left:937px;top:73px;" width="34" height="31" viewBox="0 0 34 31"><path d="M1.5 1.5 H29.5 V24 M1.5 1.5 V24.5 L5 28.5 H19" fill="#fafafa" stroke="#333" stroke-width="1"/><path d="M1.5 8.5 H29.5 M1.5 15.5 H29.5 M10.5 1.5 V22 M19.5 1.5 V18" stroke="#333" stroke-width="1"/><path d="M1.5 24.5 H6 V28" fill="none" stroke="#333" stroke-width="1"/><rect x="16.5" y="20.5" width="5" height="8" fill="#c8c8c8" stroke="#666"/><rect x="21.5" y="14.5" width="5.5" height="14" fill="#fafafa" stroke="#333"/><rect x="27" y="17.5" width="4.5" height="11" fill="#83bbed" stroke="#1c6bbd"/></svg>
<div style="left:934.9px;top:104.4px;height:20px;line-height:20px;font-size:12px;color:#333;letter-spacing:-4.37px;">グラフの</div>
<div style="left:940.5px;top:118.4px;height:20px;line-height:20px;font-size:12px;color:#333;letter-spacing:-0.10px;">移動</div>
<div style="left:1px;top:163px;width:1073px;height:51px;background:#e6e6e6"></div>
<div style="left:6px;top:173px;width:102px;height:31px;background:#fff;border:1px solid #c6c6c6;box-sizing:border-box"></div>
<div style="left:14.2px;top:179.5px;height:20px;line-height:20px;font-size:13px;color:#444;letter-spacing:1.69px;">グラフ 2</div>
<svg style="position:absolute;left:92px;top:185px;" width="9" height="5" viewBox="0 0 9 5"><path d="M0 0 H9 L4.5 5Z" fill="#666"/></svg>
<div style="left:122px;top:183px;width:2px;height:2px;background:#999"></div>
<div style="left:122px;top:187px;width:2px;height:2px;background:#999"></div>
<div style="left:122px;top:191px;width:2px;height:2px;background:#999"></div>
<div style="left:138px;top:173px;width:110px;height:31px;background:#fff;border:1px solid #c6c6c6;box-sizing:border-box"></div>
<svg style="position:absolute;left:151px;top:182px;" width="12" height="12" viewBox="0 0 12 12"><path d="M1 1 L11 11 M11 1 L1 11" stroke="#aaa" stroke-width="1.3"/></svg>
<svg style="position:absolute;left:186px;top:182px;" width="14" height="12" viewBox="0 0 14 12"><path d="M1 6.5 L5 10.5 L13 1.5" fill="none" stroke="#aaa" stroke-width="1.8"/></svg>
<div style="left:223px;top:177.5px;width:400px;height:20px;line-height:20px;font-size:14px;color:#505050;font-family:'Liberation Serif', serif;font-weight:bold"><i>f<span style="font-size:10px">x</span></i></div>
<div style="left:251px;top:173px;width:818px;height:31px;background:#fff;border:1px solid #c6c6c6;box-sizing:border-box"></div>
<svg style="position:absolute;left:1055px;top:185px;" width="9" height="6" viewBox="0 0 9 6"><path d="M1 1 L4.5 4.5 L8 1" fill="none" stroke="#555" stroke-width="1.2"/></svg>
<div style="left:1px;top:214px;width:1073px;height:409px;background:#e6e6e6"></div>
<div style="left:30px;top:233px;width:1023px;height:390px;background:#fff"></div>
<div style="left:117px;top:214px;width:1px;height:18px;background:#ababab"></div>
<div style="left:205px;top:214px;width:1px;height:18px;background:#ababab"></div>
<div style="left:293px;top:214px;width:1px;height:18px;background:#ababab"></div>
<div style="left:381px;top:214px;width:1px;height:18px;background:#ababab"></div>
<div style="left:469px;top:214px;width:1px;height:18px;background:#ababab"></div>
<div style="left:557px;top:214px;width:1px;height:18px;background:#ababab"></div>
<div style="left:645px;top:214px;width:1px;height:18px;background:#ababab"></div>
<div style="left:733px;top:214px;width:1px;height:18px;background:#ababab"></div>
<div style="left:821px;top:214px;width:1px;height:18px;background:#ababab"></div>
<div style="left:909px;top:214px;width:1px;height:18px;background:#ababab"></div>
<div style="left:997px;top:214px;width:1px;height:18px;background:#ababab"></div>
<div style="left:29px;top:214px;width:1px;height:409px;background:#a8a8a8"></div>
<div style="left:1px;top:232px;width:1052px;height:1px;background:#a8a8a8"></div>
<div style="left:-76.5px;top:214.0px;width:300px;height:20px;line-height:20px;text-align:center;font-size:15px;color:#000;font-family:'Liberation Serif', serif">A</div>
<div style="left:11.0px;top:214.0px;width:300px;height:20px;line-height:20px;text-align:center;font-size:15px;color:#000;font-family:'Liberation Serif', serif">B</div>
<div style="left:99.0px;top:214.0px;width:300px;height:20px;line-height:20px;text-align:center;font-size:15px;color:#000;font-family:'Liberation Serif', serif">C</div>
<div style="left:187.0px;top:214.0px;width:300px;height:20px;line-height:20px;text-align:center;font-size:15px;color:#000;font-family:'Liberation Serif', serif">D</div>
<div style="left:275.0px;top:214.0px;width:300px;height:20px;line-height:20px;text-align:center;font-size:15px;color:#000;font-family:'Liberation Serif', serif">E</div>
<div style="left:363.0px;top:214.0px;width:300px;height:20px;line-height:20px;text-align:center;font-size:15px;color:#000;font-family:'Liberation Serif', serif">F</div>
<div style="left:451.0px;top:214.0px;width:300px;height:20px;line-height:20px;text-align:center;font-size:15px;color:#000;font-family:'Liberation Serif', serif">G</div>
<div style="left:539.0px;top:214.0px;width:300px;height:20px;line-height:20px;text-align:center;font-size:15px;color:#000;font-family:'Liberation Serif', serif">H</div>
<div style="left:627.0px;top:214.0px;width:300px;height:20px;line-height:20px;text-align:center;font-size:15px;color:#000;font-family:'Liberation Serif', serif">I</div>
<div style="left:715.0px;top:214.0px;width:300px;height:20px;line-height:20px;text-align:center;font-size:15px;color:#000;font-family:'Liberation Serif', serif">J</div>
<div style="left:803.0px;top:214.0px;width:300px;height:20px;line-height:20px;text-align:center;font-size:15px;color:#000;font-family:'Liberation Serif', serif">K</div>
<div style="left:891.0px;top:214.0px;width:300px;height:20px;line-height:20px;text-align:center;font-size:15px;color:#000;font-family:'Liberation Serif', serif">L</div>
<svg style="position:absolute;left:14px;top:217px;" width="13" height="13" viewBox="0 0 13 13"><path d="M12 1 V12 H1Z" fill="#bdbdbd"/></svg>
<div style="left:1px;top:288px;width:28px;height:1px;background:#c4c4c4"></div>
<div style="left:1px;top:307px;width:28px;height:1px;background:#c4c4c4"></div>
<div style="left:1px;top:326px;width:28px;height:1px;background:#c4c4c4"></div>
<div style="left:1px;top:345px;width:28px;height:1px;background:#c4c4c4"></div>
<div style="left:1px;top:364px;width:28px;height:1px;background:#c4c4c4"></div>
<div style="left:1px;top:383px;width:28px;height:1px;background:#c4c4c4"></div>
<div style="left:1px;top:402px;width:28px;height:1px;background:#c4c4c4"></div>
<div style="left:1px;top:421px;width:28px;height:1px;background:#c4c4c4"></div>
<div style="left:1px;top:440px;width:28px;height:1px;background:#c4c4c4"></div>
<div style="left:1px;top:496px;width:28px;height:1px;background:#c4c4c4"></div>
<div style="left:1px;top:509px;width:28px;height:1px;background:#c4c4c4"></div>
<div style="left:1px;top:565px;width:28px;height:1px;background:#c4c4c4"></div>
<div style="left:1px;top:584px;width:28px;height:1px;background:#c4c4c4"></div>
<div style="left:1px;top:603px;width:28px;height:1px;background:#c4c4c4"></div>
<div style="left:1px;top:622px;width:28px;height:1px;background:#c4c4c4"></div>
<div style="left:1.0px;top:270.0px;width:28px;height:18px;line-height:18px;text-align:center;font-size:15px;color:#000;font-family:'Liberation Serif', serif">1</div>
<div style="left:1.0px;top:289.0px;width:28px;height:18px;line-height:18px;text-align:center;font-size:15px;color:#000;font-family:'Liberation Serif', serif">2</div>
<div style="left:1.0px;top:308.0px;width:28px;height:18px;line-height:18px;text-align:center;font-size:15px;color:#000;font-family:'Liberation Serif', serif">3</div>
<div style="left:1.0px;top:327.0px;width:28px;height:18px;line-height:18px;text-align:center;font-size:15px;color:#000;font-family:'Liberation Serif', serif">4</div>
<div style="left:1.0px;top:346.0px;width:28px;height:18px;line-height:18px;text-align:center;font-size:15px;color:#000;font-family:'Liberation Serif', serif">5</div>
<div style="left:1.0px;top:365.0px;width:28px;height:18px;line-height:18px;text-align:center;font-size:15px;color:#000;font-family:'Liberation Serif', serif">6</div>
<div style="left:1.0px;top:384.0px;width:28px;height:18px;line-height:18px;text-align:center;font-size:15px;color:#000;font-family:'Liberation Serif', serif">7</div>
<div style="left:1.0px;top:403.0px;width:28px;height:18px;line-height:18px;text-align:center;font-size:15px;color:#000;font-family:'Liberation Serif', serif">8</div>
<div style="left:1.0px;top:422.0px;width:28px;height:18px;line-height:18px;text-align:center;font-size:15px;color:#000;font-family:'Liberation Serif', serif">9</div>
<div style="left:1.0px;top:478.0px;width:28px;height:18px;line-height:18px;text-align:center;font-size:15px;color:#000;font-family:'Liberation Serif', serif">10</div>
<div style="left:1.0px;top:491.0px;width:28px;height:18px;line-height:18px;text-align:center;font-size:15px;color:#000;font-family:'Liberation Serif', serif">11</div>
<div style="left:1.0px;top:547.0px;width:28px;height:18px;line-height:18px;text-align:center;font-size:15px;color:#000;font-family:'Liberation Serif', serif">12</div>
<div style="left:1.0px;top:566.0px;width:28px;height:18px;line-height:18px;text-align:center;font-size:15px;color:#000;font-family:'Liberation Serif', serif">13</div>
<div style="left:1.0px;top:585.0px;width:28px;height:18px;line-height:18px;text-align:center;font-size:15px;color:#000;font-family:'Liberation Serif', serif">14</div>
<div style="left:1.0px;top:604.0px;width:28px;height:18px;line-height:18px;text-align:center;font-size:15px;color:#000;font-family:'Liberation Serif', serif">15</div>
<div style="left:117px;top:233px;width:1px;height:390px;background:#dadada"></div>
<div style="left:205px;top:233px;width:1px;height:390px;background:#dadada"></div>
<div style="left:293px;top:233px;width:1px;height:390px;background:#dadada"></div>
<div style="left:381px;top:233px;width:1px;height:390px;background:#dadada"></div>
<div style="left:469px;top:233px;width:1px;height:390px;background:#dadada"></div>
<div style="left:557px;top:233px;width:1px;height:390px;background:#dadada"></div>
<div style="left:645px;top:233px;width:1px;height:390px;background:#dadada"></div>
<div style="left:733px;top:233px;width:1px;height:390px;background:#dadada"></div>
<div style="left:821px;top:233px;width:1px;height:390px;background:#dadada"></div>
<div style="left:909px;top:233px;width:1px;height:390px;background:#dadada"></div>
<div style="left:997px;top:233px;width:1px;height:390px;background:#dadada"></div>
<div style="left:30px;top:288px;width:1023px;height:1px;background:#dadada"></div>
<div style="left:30px;top:307px;width:1023px;height:1px;background:#dadada"></div>
<div style="left:30px;top:326px;width:1023px;height:1px;background:#dadada"></div>
<div style="left:30px;top:345px;width:1023px;height:1px;background:#dadada"></div>
<div style="left:30px;top:364px;width:1023px;height:1px;background:#dadada"></div>
<div style="left:30px;top:383px;width:1023px;height:1px;background:#dadada"></div>
<div style="left:30px;top:402px;width:1023px;height:1px;background:#dadada"></div>
<div style="left:30px;top:421px;width:1023px;height:1px;background:#dadada"></div>
<div style="left:30px;top:440px;width:1023px;height:1px;background:#dadada"></div>
<div style="left:30px;top:496px;width:1023px;height:1px;background:#dadada"></div>
<div style="left:30px;top:509px;width:1023px;height:1px;background:#dadada"></div>
<div style="left:30px;top:565px;width:1023px;height:1px;background:#dadada"></div>
<div style="left:30px;top:584px;width:1023px;height:1px;background:#dadada"></div>
<div style="left:30px;top:603px;width:1023px;height:1px;background:#dadada"></div>
<div style="left:30px;top:622px;width:1023px;height:1px;background:#dadada"></div>
<div style="left:1053px;top:233px;width:1px;height:391px;background:#a8a8a8"></div>
<div style="left:30px;top:623px;width:1024px;height:1px;background:#a8a8a8"></div>
<div style="left:30px;top:233px;width:87px;height:55px;background:#e2efda"></div>
<div style="left:118px;top:233px;width:791px;height:55px;background:#d9e1d6"></div>
<div style="left:30px;top:289px;width:87px;height:151px;background:#fae8e9"></div>
<div style="left:118px;top:289px;width:791px;height:151px;background:#e9eef8"></div>
<div style="left:30px;top:510px;width:879px;height:55px;background:#e2efda"></div>
<div style="left:117px;top:234px;width:1px;height:55px;background:#000"></div>
<div style="left:205px;top:234px;width:1px;height:55px;background:#000"></div>
<div style="left:293px;top:234px;width:1px;height:55px;background:#000"></div>
<div style="left:381px;top:234px;width:1px;height:55px;background:#000"></div>
<div style="left:469px;top:234px;width:1px;height:55px;background:#000"></div>
<div style="left:557px;top:234px;width:1px;height:55px;background:#000"></div>
<div style="left:645px;top:234px;width:1px;height:55px;background:#000"></div>
<div style="left:733px;top:234px;width:1px;height:55px;background:#000"></div>
<div style="left:821px;top:234px;width:1px;height:55px;background:#000"></div>
<div style="left:909px;top:234px;width:1px;height:55px;background:#000"></div>
<div style="left:117px;top:288px;width:1px;height:20px;background:#000"></div>
<div style="left:205px;top:288px;width:1px;height:20px;background:#000"></div>
<div style="left:293px;top:288px;width:1px;height:20px;background:#000"></div>
<div style="left:381px;top:288px;width:1px;height:20px;background:#000"></div>
<div style="left:469px;top:288px;width:1px;height:20px;background:#000"></div>
<div style="left:557px;top:288px;width:1px;height:20px;background:#000"></div>
<div style="left:645px;top:288px;width:1px;height:20px;background:#000"></div>
<div style="left:733px;top:288px;width:1px;height:20px;background:#000"></div>
<div style="left:821px;top:288px;width:1px;height:20px;background:#000"></div>
<div style="left:909px;top:288px;width:1px;height:20px;background:#000"></div>
<div style="left:117px;top:307px;width:1px;height:20px;background:#000"></div>
<div style="left:205px;top:307px;width:1px;height:20px;background:#000"></div>
<div style="left:293px;top:307px;width:1px;height:20px;background:#000"></div>
<div style="left:381px;top:307px;width:1px;height:20px;background:#000"></div>
<div style="left:469px;top:307px;width:1px;height:20px;background:#000"></div>
<div style="left:557px;top:307px;width:1px;height:20px;background:#000"></div>
<div style="left:645px;top:307px;width:1px;height:20px;background:#000"></div>
<div style="left:733px;top:307px;width:1px;height:20px;background:#000"></div>
<div style="left:821px;top:307px;width:1px;height:20px;background:#000"></div>
<div style="left:909px;top:307px;width:1px;height:20px;background:#000"></div>
<div style="left:117px;top:326px;width:1px;height:20px;background:#000"></div>
<div style="left:205px;top:326px;width:1px;height:20px;background:#000"></div>
<div style="left:293px;top:326px;width:1px;height:20px;background:#000"></div>
<div style="left:381px;top:326px;width:1px;height:20px;background:#000"></div>
<div style="left:469px;top:326px;width:1px;height:20px;background:#000"></div>
<div style="left:557px;top:326px;width:1px;height:20px;background:#000"></div>
<div style="left:645px;top:326px;width:1px;height:20px;background:#000"></div>
<div style="left:733px;top:326px;width:1px;height:20px;background:#000"></div>
<div style="left:821px;top:326px;width:1px;height:20px;background:#000"></div>
<div style="left:909px;top:326px;width:1px;height:20px;background:#000"></div>
<div style="left:117px;top:345px;width:1px;height:20px;background:#000"></div>
<div style="left:205px;top:345px;width:1px;height:20px;background:#000"></div>
<div style="left:293px;top:345px;width:1px;height:20px;background:#000"></div>
<div style="left:381px;top:345px;width:1px;height:20px;background:#000"></div>
<div style="left:469px;top:345px;width:1px;height:20px;background:#000"></div>
<div style="left:557px;top:345px;width:1px;height:20px;background:#000"></div>
<div style="left:645px;top:345px;width:1px;height:20px;background:#000"></div>
<div style="left:733px;top:345px;width:1px;height:20px;background:#000"></div>
<div style="left:821px;top:345px;width:1px;height:20px;background:#000"></div>
<div style="left:909px;top:345px;width:1px;height:20px;background:#000"></div>
<div style="left:117px;top:364px;width:1px;height:20px;background:#000"></div>
<div style="left:205px;top:364px;width:1px;height:20px;background:#000"></div>
<div style="left:293px;top:364px;width:1px;height:20px;background:#000"></div>
<div style="left:381px;top:364px;width:1px;height:20px;background:#000"></div>
<div style="left:469px;top:364px;width:1px;height:20px;background:#000"></div>
<div style="left:557px;top:364px;width:1px;height:20px;background:#000"></div>
<div style="left:645px;top:364px;width:1px;height:20px;background:#000"></div>
<div style="left:733px;top:364px;width:1px;height:20px;background:#000"></div>
<div style="left:821px;top:364px;width:1px;height:20px;background:#000"></div>
<div style="left:909px;top:364px;width:1px;height:20px;background:#000"></div>
<div style="left:117px;top:383px;width:1px;height:20px;background:#000"></div>
<div style="left:205px;top:383px;width:1px;height:20px;background:#000"></div>
<div style="left:293px;top:383px;width:1px;height:20px;background:#000"></div>
<div style="left:381px;top:383px;width:1px;height:20px;background:#000"></div>
<div style="left:469px;top:383px;width:1px;height:20px;background:#000"></div>
<div style="left:557px;top:383px;width:1px;height:20px;background:#000"></div>
<div style="left:645px;top:383px;width:1px;height:20px;background:#000"></div>
<div style="left:733px;top:383px;width:1px;height:20px;background:#000"></div>
<div style="left:821px;top:383px;width:1px;height:20px;background:#000"></div>
<div style="left:909px;top:383px;width:1px;height:20px;background:#000"></div>
<div style="left:117px;top:402px;width:1px;height:20px;background:#000"></div>
<div style="left:205px;top:402px;width:1px;height:20px;background:#000"></div>
<div style="left:293px;top:402px;width:1px;height:20px;background:#000"></div>
<div style="left:381px;top:402px;width:1px;height:20px;background:#000"></div>
<div style="left:469px;top:402px;width:1px;height:20px;background:#000"></div>
<div style="left:557px;top:402px;width:1px;height:20px;background:#000"></div>
<div style="left:645px;top:402px;width:1px;height:20px;background:#000"></div>
<div style="left:733px;top:402px;width:1px;height:20px;background:#000"></div>
<div style="left:821px;top:402px;width:1px;height:20px;background:#000"></div>
<div style="left:909px;top:402px;width:1px;height:20px;background:#000"></div>
<div style="left:117px;top:421px;width:1px;height:20px;background:#000"></div>
<div style="left:205px;top:421px;width:1px;height:20px;background:#000"></div>
<div style="left:293px;top:421px;width:1px;height:20px;background:#000"></div>
<div style="left:381px;top:421px;width:1px;height:20px;background:#000"></div>
<div style="left:469px;top:421px;width:1px;height:20px;background:#000"></div>
<div style="left:557px;top:421px;width:1px;height:20px;background:#000"></div>
<div style="left:645px;top:421px;width:1px;height:20px;background:#000"></div>
<div style="left:733px;top:421px;width:1px;height:20px;background:#000"></div>
<div style="left:821px;top:421px;width:1px;height:20px;background:#000"></div>
<div style="left:909px;top:421px;width:1px;height:20px;background:#000"></div>
<div style="left:117px;top:440px;width:1px;height:57px;background:#000"></div>
<div style="left:205px;top:440px;width:1px;height:57px;background:#000"></div>
<div style="left:293px;top:440px;width:1px;height:57px;background:#000"></div>
<div style="left:381px;top:440px;width:1px;height:57px;background:#000"></div>
<div style="left:469px;top:440px;width:1px;height:57px;background:#000"></div>
<div style="left:557px;top:440px;width:1px;height:57px;background:#000"></div>
<div style="left:645px;top:440px;width:1px;height:57px;background:#000"></div>
<div style="left:733px;top:440px;width:1px;height:57px;background:#000"></div>
<div style="left:821px;top:440px;width:1px;height:57px;background:#000"></div>
<div style="left:909px;top:440px;width:1px;height:57px;background:#000"></div>
<div style="left:117px;top:509px;width:1px;height:57px;background:#000"></div>
<div style="left:205px;top:509px;width:1px;height:57px;background:#000"></div>
<div style="left:293px;top:509px;width:1px;height:57px;background:#000"></div>
<div style="left:381px;top:509px;width:1px;height:57px;background:#000"></div>
<div style="left:469px;top:509px;width:1px;height:57px;background:#000"></div>
<div style="left:557px;top:509px;width:1px;height:57px;background:#000"></div>
<div style="left:645px;top:509px;width:1px;height:57px;background:#000"></div>
<div style="left:733px;top:509px;width:1px;height:57px;background:#000"></div>
<div style="left:821px;top:509px;width:1px;height:57px;background:#000"></div>
<div style="left:909px;top:509px;width:1px;height:57px;background:#000"></div>
<div style="left:117px;top:565px;width:1px;height:20px;background:#000"></div>
<div style="left:205px;top:565px;width:1px;height:20px;background:#000"></div>
<div style="left:293px;top:565px;width:1px;height:20px;background:#000"></div>
<div style="left:381px;top:565px;width:1px;height:20px;background:#000"></div>
<div style="left:469px;top:565px;width:1px;height:20px;background:#000"></div>
<div style="left:557px;top:565px;width:1px;height:20px;background:#000"></div>
<div style="left:645px;top:565px;width:1px;height:20px;background:#000"></div>
<div style="left:733px;top:565px;width:1px;height:20px;background:#000"></div>
<div style="left:821px;top:565px;width:1px;height:20px;background:#000"></div>
<div style="left:909px;top:565px;width:1px;height:20px;background:#000"></div>
<div style="left:117px;top:584px;width:1px;height:20px;background:#000"></div>
<div style="left:205px;top:584px;width:1px;height:20px;background:#000"></div>
<div style="left:293px;top:584px;width:1px;height:20px;background:#000"></div>
<div style="left:381px;top:584px;width:1px;height:20px;background:#000"></div>
<div style="left:469px;top:584px;width:1px;height:20px;background:#000"></div>
<div style="left:557px;top:584px;width:1px;height:20px;background:#000"></div>
<div style="left:645px;top:584px;width:1px;height:20px;background:#000"></div>
<div style="left:733px;top:584px;width:1px;height:20px;background:#000"></div>
<div style="left:821px;top:584px;width:1px;height:20px;background:#000"></div>
<div style="left:909px;top:584px;width:1px;height:20px;background:#000"></div>
<div style="left:117px;top:603px;width:1px;height:20px;background:#000"></div>
<div style="left:205px;top:603px;width:1px;height:20px;background:#000"></div>
<div style="left:293px;top:603px;width:1px;height:20px;background:#000"></div>
<div style="left:381px;top:603px;width:1px;height:20px;background:#000"></div>
<div style="left:469px;top:603px;width:1px;height:20px;background:#000"></div>
<div style="left:557px;top:603px;width:1px;height:20px;background:#000"></div>
<div style="left:645px;top:603px;width:1px;height:20px;background:#000"></div>
<div style="left:733px;top:603px;width:1px;height:20px;background:#000"></div>
<div style="left:821px;top:603px;width:1px;height:20px;background:#000"></div>
<div style="left:909px;top:603px;width:1px;height:20px;background:#000"></div>
<div style="left:30px;top:288px;width:880px;height:1px;background:#000"></div>
<div style="left:30px;top:307px;width:880px;height:1px;background:#000"></div>
<div style="left:30px;top:326px;width:880px;height:1px;background:#000"></div>
<div style="left:30px;top:345px;width:880px;height:1px;background:#000"></div>
<div style="left:30px;top:364px;width:880px;height:1px;background:#000"></div>
<div style="left:30px;top:383px;width:880px;height:1px;background:#000"></div>
<div style="left:30px;top:402px;width:880px;height:1px;background:#000"></div>
<div style="left:30px;top:421px;width:880px;height:1px;background:#000"></div>
<div style="left:30px;top:440px;width:880px;height:1px;background:#000"></div>
<div style="left:30px;top:496px;width:880px;height:1px;background:#000"></div>
<div style="left:30px;top:509px;width:880px;height:1px;background:#000"></div>
<div style="left:30px;top:565px;width:880px;height:1px;background:#000"></div>
<div style="left:30px;top:584px;width:880px;height:1px;background:#000"></div>
<div style="left:30px;top:603px;width:880px;height:1px;background:#000"></div>
<div style="left:30px;top:622px;width:880px;height:1px;background:#000"></div>
<div style="left:32px;top:234px;width:84px;height:55px;display:flex;justify-content:space-between;align-items:center;font-size:16px;color:#000;line-height:1"><span>地</span><span>域</span><span>別</span></div>
<div style="left:120px;top:234px;width:83px;height:55px;display:flex;justify-content:space-between;align-items:center;font-size:16px;color:#000;line-height:1"><span>平</span><span>成</span><span style="font-family:'Liberation Mono', monospace;font-size:17px;display:inline-block;transform:scaleX(0.706);transform-origin:0 50%;width:14.4px;margin-top:1px">23</span><span>年</span></div>
<div style="left:120px;top:511px;width:83px;height:55px;display:flex;justify-content:space-between;align-items:center;font-size:16px;color:#000;line-height:1"><span>平</span><span>成</span><span style="font-family:'Liberation Mono', monospace;font-size:17px;display:inline-block;transform:scaleX(0.706);transform-origin:0 50%;width:14.4px;margin-top:1px">23</span><span>年</span></div>
<div style="left:208px;top:234px;width:83px;height:55px;display:flex;justify-content:space-between;align-items:center;font-size:16px;color:#000;line-height:1"><span>平</span><span>成</span><span style="font-family:'Liberation Mono', monospace;font-size:17px;display:inline-block;transform:scaleX(0.706);transform-origin:0 50%;width:14.4px;margin-top:1px">24</span><span>年</span></div>
<div style="left:208px;top:511px;width:83px;height:55px;display:flex;justify-content:space-between;align-items:center;font-size:16px;color:#000;line-height:1"><span>平</span><span>成</span><span style="font-family:'Liberation Mono', monospace;font-size:17px;display:inline-block;transform:scaleX(0.706);transform-origin:0 50%;width:14.4px;margin-top:1px">24</span><span>年</span></div>
<div style="left:296px;top:234px;width:83px;height:55px;display:flex;justify-content:space-between;align-items:center;font-size:16px;color:#000;line-height:1"><span>平</span><span>成</span><span style="font-family:'Liberation Mono', monospace;font-size:17px;display:inline-block;transform:scaleX(0.706);transform-origin:0 50%;width:14.4px;margin-top:1px">25</span><span>年</span></div>
<div style="left:296px;top:511px;width:83px;height:55px;display:flex;justify-content:space-between;align-items:center;font-size:16px;color:#000;line-height:1"><span>平</span><span>成</span><span style="font-family:'Liberation Mono', monospace;font-size:17px;display:inline-block;transform:scaleX(0.706);transform-origin:0 50%;width:14.4px;margin-top:1px">25</span><span>年</span></div>
<div style="left:384px;top:234px;width:83px;height:55px;display:flex;justify-content:space-between;align-items:center;font-size:16px;color:#000;line-height:1"><span>平</span><span>成</span><span style="font-family:'Liberation Mono', monospace;font-size:17px;display:inline-block;transform:scaleX(0.706);transform-origin:0 50%;width:14.4px;margin-top:1px">26</span><span>年</span></div>
<div style="left:384px;top:511px;width:83px;height:55px;display:flex;justify-content:space-between;align-items:center;font-size:16px;color:#000;line-height:1"><span>平</span><span>成</span><span style="font-family:'Liberation Mono', monospace;font-size:17px;display:inline-block;transform:scaleX(0.706);transform-origin:0 50%;width:14.4px;margin-top:1px">26</span><span>年</span></div>
<div style="left:472px;top:234px;width:83px;height:55px;display:flex;justify-content:space-between;align-items:center;font-size:16px;color:#000;line-height:1"><span>平</span><span>成</span><span style="font-family:'Liberation Mono', monospace;font-size:17px;display:inline-block;transform:scaleX(0.706);transform-origin:0 50%;width:14.4px;margin-top:1px">27</span><span>年</span></div>
<div style="left:472px;top:511px;width:83px;height:55px;display:flex;justify-content:space-between;align-items:center;font-size:16px;color:#000;line-height:1"><span>平</span><span>成</span><span style="font-family:'Liberation Mono', monospace;font-size:17px;display:inline-block;transform:scaleX(0.706);transform-origin:0 50%;width:14.4px;margin-top:1px">27</span><span>年</span></div>
<div style="left:560px;top:234px;width:83px;height:55px;display:flex;justify-content:space-between;align-items:center;font-size:16px;color:#000;line-height:1"><span>平</span><span>成</span><span style="font-family:'Liberation Mono', monospace;font-size:17px;display:inline-block;transform:scaleX(0.706);transform-origin:0 50%;width:14.4px;margin-top:1px">28</span><span>年</span></div>
<div style="left:560px;top:511px;width:83px;height:55px;display:flex;justify-content:space-between;align-items:center;font-size:16px;color:#000;line-height:1"><span>平</span><span>成</span><span style="font-family:'Liberation Mono', monospace;font-size:17px;display:inline-block;transform:scaleX(0.706);transform-origin:0 50%;width:14.4px;margin-top:1px">28</span><span>年</span></div>
<div style="left:648px;top:234px;width:83px;height:55px;display:flex;justify-content:space-between;align-items:center;font-size:16px;color:#000;line-height:1"><span>平</span><span>成</span><span style="font-family:'Liberation Mono', monospace;font-size:17px;display:inline-block;transform:scaleX(0.706);transform-origin:0 50%;width:14.4px;margin-top:1px">29</span><span>年</span></div>
<div style="left:648px;top:511px;width:83px;height:55px;display:flex;justify-content:space-between;align-items:center;font-size:16px;color:#000;line-height:1"><span>平</span><span>成</span><span style="font-family:'Liberation Mono', monospace;font-size:17px;display:inline-block;transform:scaleX(0.706);transform-origin:0 50%;width:14.4px;margin-top:1px">29</span><span>年</span></div>
<div style="left:736px;top:234px;width:83px;height:55px;display:flex;justify-content:space-between;align-items:center;font-size:16px;color:#000;line-height:1"><span>平</span><span>成</span><span style="font-family:'Liberation Mono', monospace;font-size:17px;display:inline-block;transform:scaleX(0.706);transform-origin:0 50%;width:14.4px;margin-top:1px">30</span><span>年</span></div>
<div style="left:736px;top:511px;width:83px;height:55px;display:flex;justify-content:space-between;align-items:center;font-size:16px;color:#000;line-height:1"><span>平</span><span>成</span><span style="font-family:'Liberation Mono', monospace;font-size:17px;display:inline-block;transform:scaleX(0.706);transform-origin:0 50%;width:14.4px;margin-top:1px">30</span><span>年</span></div>
<div style="left:824px;top:234px;width:83px;height:55px;display:flex;justify-content:space-between;align-items:center;font-size:16px;color:#000;line-height:1"><span>令</span><span>和</span><span>元</span><span>年</span></div>
<div style="left:824px;top:511px;width:83px;height:55px;display:flex;justify-content:space-between;align-items:center;font-size:16px;color:#000;line-height:1"><span>令</span><span>和</span><span>元</span><span>年</span></div>
<div style="left:32px;top:511px;width:84px;height:55px;display:flex;justify-content:space-between;align-items:center;font-size:16px;color:#000;line-height:1"><span>地</span><span>域</span><span>別</span></div>
<div style="left:31px;top:290px;width:86px;height:18px;display:flex;justify-content:space-between;align-items:center;font-size:16px;color:#000;line-height:1"><span>大</span><span>阪</span><span>市</span><span>地</span><span>域</span></div>
<div style="left:31px;top:309px;width:86px;height:18px;display:flex;justify-content:space-between;align-items:center;font-size:16px;color:#000;line-height:1"><span>三</span><span>島</span><span>地</span><span>域</span></div>
<div style="left:31px;top:328px;width:86px;height:18px;display:flex;justify-content:space-between;align-items:center;font-size:16px;color:#000;line-height:1"><span>豊</span><span>能</span><span>地</span><span>域</span></div>
<div style="left:31px;top:347px;width:86px;height:18px;display:flex;justify-content:space-between;align-items:center;font-size:16px;color:#000;line-height:1"><span>北</span><span>河</span><span>内</span><span>地</span><span>域</span></div>
<div style="left:31px;top:366px;width:86px;height:18px;display:flex;justify-content:space-between;align-items:center;font-size:16px;color:#000;line-height:1"><span>中</span><span>河</span><span>内</span><span>地</span><span>域</span></div>
<div style="left:31px;top:385px;width:86px;height:18px;display:flex;justify-content:space-between;align-items:center;font-size:16px;color:#000;line-height:1"><span>南</span><span>河</span><span>内</span><span>地</span><span>域</span></div>
<div style="left:31px;top:404px;width:86px;height:18px;display:flex;justify-content:space-between;align-items:center;font-size:16px;color:#000;line-height:1"><span>泉</span><span>北</span><span>地</span><span>域</span></div>
<div style="left:31px;top:423px;width:86px;height:18px;display:flex;justify-content:space-between;align-items:center;font-size:16px;color:#000;line-height:1"><span>泉</span><span>南</span><span>地</span><span>域</span></div>
<div style="left:32px;top:442px;width:84px;height:55px;display:flex;justify-content:space-between;align-items:center;font-size:16px;color:#000;line-height:1"><span>大</span><span>阪</span><span>府</span></div>
<div style="left:32px;top:567px;width:84px;height:18px;display:flex;justify-content:space-between;align-items:center;font-size:16px;color:#000;line-height:1"><span>大</span><span>阪</span><span>市</span></div>
<div style="left:32px;top:586px;width:84px;height:18px;display:flex;justify-content:space-between;align-items:center;font-size:16px;color:#000;line-height:1"><span>都</span><span>島</span><span>区</span></div>
<div style="left:32px;top:605px;width:84px;height:18px;display:flex;justify-content:space-between;align-items:center;font-size:16px;color:#000;line-height:1"><span>福</span><span>島</span><span>区</span></div>
<div style="left:705px;top:289.5px;width:200px;height:20px;line-height:20px;text-align:right;font-family:'Liberation Mono', monospace;font-size:17px;color:#000"><span style="display:inline-block;transform:scaleX(0.706);transform-origin:100% 50%">2,740,202</span></div>
<div style="left:617px;top:289.5px;width:200px;height:20px;line-height:20px;text-align:right;font-family:'Liberation Mono', monospace;font-size:17px;color:#000"><span style="display:inline-block;transform:scaleX(0.706);transform-origin:100% 50%">2,725,006</span></div>
<div style="left:705px;top:308.5px;width:200px;height:20px;line-height:20px;text-align:right;font-family:'Liberation Mono', monospace;font-size:17px;color:#000"><span style="display:inline-block;transform:scaleX(0.706);transform-origin:100% 50%">1,129,701</span></div>
<div style="left:617px;top:308.5px;width:200px;height:20px;line-height:20px;text-align:right;font-family:'Liberation Mono', monospace;font-size:17px;color:#000"><span style="display:inline-block;transform:scaleX(0.706);transform-origin:100% 50%">1,128,110</span></div>
<div style="left:705px;top:327.5px;width:200px;height:20px;line-height:20px;text-align:right;font-family:'Liberation Mono', monospace;font-size:17px;color:#000"><span style="display:inline-block;transform:scaleX(0.706);transform-origin:100% 50%">668,312</span></div>
<div style="left:617px;top:327.5px;width:200px;height:20px;line-height:20px;text-align:right;font-family:'Liberation Mono', monospace;font-size:17px;color:#000"><span style="display:inline-block;transform:scaleX(0.706);transform-origin:100% 50%">666,354</span></div>
<div style="left:705px;top:346.5px;width:200px;height:20px;line-height:20px;text-align:right;font-family:'Liberation Mono', monospace;font-size:17px;color:#000"><span style="display:inline-block;transform:scaleX(0.706);transform-origin:100% 50%">1,142,638</span></div>
<div style="left:617px;top:346.5px;width:200px;height:20px;line-height:20px;text-align:right;font-family:'Liberation Mono', monospace;font-size:17px;color:#000"><span style="display:inline-block;transform:scaleX(0.706);transform-origin:100% 50%">1,147,798</span></div>
<div style="left:705px;top:365.5px;width:200px;height:20px;line-height:20px;text-align:right;font-family:'Liberation Mono', monospace;font-size:17px;color:#000"><span style="display:inline-block;transform:scaleX(0.706);transform-origin:100% 50%">829,426</span></div>
<div style="left:617px;top:365.5px;width:200px;height:20px;line-height:20px;text-align:right;font-family:'Liberation Mono', monospace;font-size:17px;color:#000"><span style="display:inline-block;transform:scaleX(0.706);transform-origin:100% 50%">832,116</span></div>
<div style="left:705px;top:384.5px;width:200px;height:20px;line-height:20px;text-align:right;font-family:'Liberation Mono', monospace;font-size:17px;color:#000"><span style="display:inline-block;transform:scaleX(0.706);transform-origin:100% 50%">596,572</span></div>
<div style="left:617px;top:384.5px;width:200px;height:20px;line-height:20px;text-align:right;font-family:'Liberation Mono', monospace;font-size:17px;color:#000"><span style="display:inline-block;transform:scaleX(0.706);transform-origin:100% 50%">600,780</span></div>
<div style="left:705px;top:403.5px;width:200px;height:20px;line-height:20px;text-align:right;font-family:'Liberation Mono', monospace;font-size:17px;color:#000"><span style="display:inline-block;transform:scaleX(0.706);transform-origin:100% 50%">1,160,905</span></div>
<div style="left:617px;top:403.5px;width:200px;height:20px;line-height:20px;text-align:right;font-family:'Liberation Mono', monospace;font-size:17px;color:#000"><span style="display:inline-block;transform:scaleX(0.706);transform-origin:100% 50%">1,164,444</span></div>
<div style="left:705px;top:422.5px;width:200px;height:20px;line-height:20px;text-align:right;font-family:'Liberation Mono', monospace;font-size:17px;color:#000"><span style="display:inline-block;transform:scaleX(0.706);transform-origin:100% 50%">555,697</span></div>
<div style="left:617px;top:422.5px;width:200px;height:20px;line-height:20px;text-align:right;font-family:'Liberation Mono', monospace;font-size:17px;color:#000"><span style="display:inline-block;transform:scaleX(0.706);transform-origin:100% 50%">559,556</span></div>
<div style="left:705px;top:460.0px;width:200px;height:20px;line-height:20px;text-align:right;font-family:'Liberation Mono', monospace;font-size:17px;color:#000"><span style="display:inline-block;transform:scaleX(0.706);transform-origin:100% 50%">8,823,453</span></div>
<div style="left:617px;top:460.0px;width:200px;height:20px;line-height:20px;text-align:right;font-family:'Liberation Mono', monospace;font-size:17px;color:#000"><span style="display:inline-block;transform:scaleX(0.706);transform-origin:100% 50%">8,834,566</span></div>
<div style="left:1px;top:566.5px;width:200px;height:20px;line-height:20px;text-align:right;font-family:'Liberation Mono', monospace;font-size:17px;color:#000"><span style="display:inline-block;transform:scaleX(0.706);transform-origin:100% 50%">2,668,972</span></div>
<div style="left:1px;top:585.5px;width:200px;height:20px;line-height:20px;text-align:right;font-family:'Liberation Mono', monospace;font-size:17px;color:#000"><span style="display:inline-block;transform:scaleX(0.706);transform-origin:100% 50%">103,190</span></div>
<div style="left:1px;top:604.5px;width:200px;height:20px;line-height:20px;text-align:right;font-family:'Liberation Mono', monospace;font-size:17px;color:#000"><span style="display:inline-block;transform:scaleX(0.706);transform-origin:100% 50%">68,905</span></div>
<div style="left:89px;top:566.5px;width:200px;height:20px;line-height:20px;text-align:right;font-family:'Liberation Mono', monospace;font-size:17px;color:#000"><span style="display:inline-block;transform:scaleX(0.706);transform-origin:100% 50%">2,674,154</span></div>
<div style="left:89px;top:585.5px;width:200px;height:20px;line-height:20px;text-align:right;font-family:'Liberation Mono', monospace;font-size:17px;color:#000"><span style="display:inline-block;transform:scaleX(0.706);transform-origin:100% 50%">104,077</span></div>
<div style="left:89px;top:604.5px;width:200px;height:20px;line-height:20px;text-align:right;font-family:'Liberation Mono', monospace;font-size:17px;color:#000"><span style="display:inline-block;transform:scaleX(0.706);transform-origin:100% 50%">69,804</span></div>
<div style="left:177px;top:566.5px;width:200px;height:20px;line-height:20px;text-align:right;font-family:'Liberation Mono', monospace;font-size:17px;color:#000"><span style="display:inline-block;transform:scaleX(0.706);transform-origin:100% 50%">2,678,663</span></div>
<div style="left:177px;top:585.5px;width:200px;height:20px;line-height:20px;text-align:right;font-family:'Liberation Mono', monospace;font-size:17px;color:#000"><span style="display:inline-block;transform:scaleX(0.706);transform-origin:100% 50%">104,358</span></div>
<div style="left:177px;top:604.5px;width:200px;height:20px;line-height:20px;text-align:right;font-family:'Liberation Mono', monospace;font-size:17px;color:#000"><span style="display:inline-block;transform:scaleX(0.706);transform-origin:100% 50%">71,259</span></div>
<div style="left:265px;top:566.5px;width:200px;height:20px;line-height:20px;text-align:right;font-family:'Liberation Mono', monospace;font-size:17px;color:#000"><span style="display:inline-block;transform:scaleX(0.706);transform-origin:100% 50%">2,679,808</span></div>
<div style="left:265px;top:585.5px;width:200px;height:20px;line-height:20px;text-align:right;font-family:'Liberation Mono', monospace;font-size:17px;color:#000"><span style="display:inline-block;transform:scaleX(0.706);transform-origin:100% 50%">104,546</span></div>
<div style="left:265px;top:604.5px;width:200px;height:20px;line-height:20px;text-align:right;font-family:'Liberation Mono', monospace;font-size:17px;color:#000"><span style="display:inline-block;transform:scaleX(0.706);transform-origin:100% 50%">71,765</span></div>
<div style="left:353px;top:566.5px;width:200px;height:20px;line-height:20px;text-align:right;font-family:'Liberation Mono', monospace;font-size:17px;color:#000"><span style="display:inline-block;transform:scaleX(0.706);transform-origin:100% 50%">2,691,185</span></div>
<div style="left:353px;top:585.5px;width:200px;height:20px;line-height:20px;text-align:right;font-family:'Liberation Mono', monospace;font-size:17px;color:#000"><span style="display:inline-block;transform:scaleX(0.706);transform-origin:100% 50%">104,727</span></div>
<div style="left:353px;top:604.5px;width:200px;height:20px;line-height:20px;text-align:right;font-family:'Liberation Mono', monospace;font-size:17px;color:#000"><span style="display:inline-block;transform:scaleX(0.706);transform-origin:100% 50%">72,484</span></div>
<div style="left:441px;top:566.5px;width:200px;height:20px;line-height:20px;text-align:right;font-family:'Liberation Mono', monospace;font-size:17px;color:#000"><span style="display:inline-block;transform:scaleX(0.706);transform-origin:100% 50%">2,702,033</span></div>
<div style="left:441px;top:585.5px;width:200px;height:20px;line-height:20px;text-align:right;font-family:'Liberation Mono', monospace;font-size:17px;color:#000"><span style="display:inline-block;transform:scaleX(0.706);transform-origin:100% 50%">105,779</span></div>
<div style="left:441px;top:604.5px;width:200px;height:20px;line-height:20px;text-align:right;font-family:'Liberation Mono', monospace;font-size:17px;color:#000"><span style="display:inline-block;transform:scaleX(0.706);transform-origin:100% 50%">73,352</span></div>
<div style="left:529px;top:566.5px;width:200px;height:20px;line-height:20px;text-align:right;font-family:'Liberation Mono', monospace;font-size:17px;color:#000"><span style="display:inline-block;transform:scaleX(0.706);transform-origin:100% 50%">2,713,157</span></div>
<div style="left:529px;top:585.5px;width:200px;height:20px;line-height:20px;text-align:right;font-family:'Liberation Mono', monospace;font-size:17px;color:#000"><span style="display:inline-block;transform:scaleX(0.706);transform-origin:100% 50%">106,523</span></div>
<div style="left:529px;top:604.5px;width:200px;height:20px;line-height:20px;text-align:right;font-family:'Liberation Mono', monospace;font-size:17px;color:#000"><span style="display:inline-block;transform:scaleX(0.706);transform-origin:100% 50%">74,381</span></div>
<div style="left:617px;top:566.5px;width:200px;height:20px;line-height:20px;text-align:right;font-family:'Liberation Mono', monospace;font-size:17px;color:#000"><span style="display:inline-block;transform:scaleX(0.706);transform-origin:100% 50%">2,725,006</span></div>
<div style="left:617px;top:585.5px;width:200px;height:20px;line-height:20px;text-align:right;font-family:'Liberation Mono', monospace;font-size:17px;color:#000"><span style="display:inline-block;transform:scaleX(0.706);transform-origin:100% 50%">106,858</span></div>
<div style="left:617px;top:604.5px;width:200px;height:20px;line-height:20px;text-align:right;font-family:'Liberation Mono', monospace;font-size:17px;color:#000"><span style="display:inline-block;transform:scaleX(0.706);transform-origin:100% 50%">75,896</span></div>
<div style="left:705px;top:566.5px;width:200px;height:20px;line-height:20px;text-align:right;font-family:'Liberation Mono', monospace;font-size:17px;color:#000"><span style="display:inline-block;transform:scaleX(0.706);transform-origin:100% 50%">2,740,202</span></div>
<div style="left:705px;top:585.5px;width:200px;height:20px;line-height:20px;text-align:right;font-family:'Liberation Mono', monospace;font-size:17px;color:#000"><span style="display:inline-block;transform:scaleX(0.706);transform-origin:100% 50%">107,430</span></div>
<div style="left:705px;top:604.5px;width:200px;height:20px;line-height:20px;text-align:right;font-family:'Liberation Mono', monospace;font-size:17px;color:#000"><span style="display:inline-block;transform:scaleX(0.706);transform-origin:100% 50%">77,636</span></div>
<div style="left:118px;top:233px;width:1px;height:55px;background:#fff"></div>
<div style="left:118px;top:233px;width:791px;height:1px;background:#fff"></div>
<div style="left:116px;top:233px;width:2px;height:56px;background:#7e4fc0"></div>
<div style="left:115px;top:233px;width:5px;height:2px;background:#7e4fc0"></div>
<div style="left:909px;top:233px;width:2px;height:56px;background:#7e4fc0"></div>
<div style="left:907px;top:233px;width:5px;height:2px;background:#7e4fc0"></div>
<div style="left:116px;top:288px;width:795px;height:2px;background:#7e4fc0"></div>
<div style="left:907px;top:286px;width:5px;height:5px;background:#7e4fc0"></div>
<div style="left:909px;top:291px;width:2px;height:150px;background:#3a6fd0"></div>
<div style="left:116px;top:440px;width:792px;height:2px;background:#3a6fd0"></div>
<div style="left:907px;top:438px;width:5px;height:5px;background:#3a6fd0"></div>
<div style="left:32px;top:287px;width:85px;height:2px;background:#c3202b"></div>
<div style="left:30px;top:286px;width:2px;height:4px;background:#c3202b"></div>
<div style="left:32px;top:440px;width:85px;height:2px;background:#c3202b"></div>
<div style="left:30px;top:439px;width:2px;height:4px;background:#c3202b"></div>
<svg style="position:absolute;left:89px;top:284px;" width="692" height="288" viewBox="0 0 692 288"><rect x="0.5" y="0.5" width="691" height="287" fill="#fff" stroke="#a6a6a6" stroke-width="1"/><line x1="78.30000000000001" y1="224.70" x2="676" y2="224.70" stroke="#d9d9d9" stroke-width="1"/><line x1="78.30000000000001" y1="203.63" x2="676" y2="203.63" stroke="#d9d9d9" stroke-width="1"/><line x1="78.30000000000001" y1="182.56" x2="676" y2="182.56" stroke="#d9d9d9" stroke-width="1"/><line x1="78.30000000000001" y1="161.49" x2="676" y2="161.49" stroke="#d9d9d9" stroke-width="1"/><line x1="78.30000000000001" y1="140.42" x2="676" y2="140.42" stroke="#d9d9d9" stroke-width="1"/><line x1="78.30000000000001" y1="119.35" x2="676" y2="119.35" stroke="#d9d9d9" stroke-width="1"/><line x1="78.30000000000001" y1="98.28" x2="676" y2="98.28" stroke="#d9d9d9" stroke-width="1"/><line x1="78.30000000000001" y1="77.21" x2="676" y2="77.21" stroke="#d9d9d9" stroke-width="1"/><line x1="78.30000000000001" y1="56.14" x2="676" y2="56.14" stroke="#d9d9d9" stroke-width="1"/><line x1="78.30000000000001" y1="35.07" x2="676" y2="35.07" stroke="#d9d9d9" stroke-width="1"/><line x1="78.30000000000001" y1="14.00" x2="676" y2="14.00" stroke="#d9d9d9" stroke-width="1"/><rect x="99.10" y="168.65" width="26.3" height="56.05" fill="#4472c4"/><rect x="99.10" y="144.55" width="26.3" height="24.10" fill="#ed7d31"/><rect x="99.10" y="131.25" width="26.3" height="13.30" fill="#a5a5a5"/><rect x="99.10" y="106.35" width="26.3" height="24.90" fill="#ffc000"/><rect x="99.10" y="88.25" width="26.3" height="18.10" fill="#5b9bd5"/><rect x="99.10" y="74.75" width="26.3" height="13.50" fill="#70ad47"/><rect x="99.10" y="49.65" width="26.3" height="25.10" fill="#264478"/><rect x="99.10" y="37.85" width="26.3" height="11.80" fill="#9e480e"/><rect x="165.20" y="168.65" width="26.3" height="56.05" fill="#4472c4"/><rect x="165.20" y="144.55" width="26.3" height="24.10" fill="#ed7d31"/><rect x="165.20" y="130.55" width="26.3" height="14.00" fill="#a5a5a5"/><rect x="165.20" y="106.35" width="26.3" height="24.20" fill="#ffc000"/><rect x="165.20" y="88.25" width="26.3" height="18.10" fill="#5b9bd5"/><rect x="165.20" y="74.75" width="26.3" height="13.50" fill="#70ad47"/><rect x="165.20" y="49.65" width="26.3" height="25.10" fill="#264478"/><rect x="165.20" y="37.85" width="26.3" height="11.80" fill="#9e480e"/><rect x="231.90" y="168.15" width="26.3" height="56.55" fill="#4472c4"/><rect x="231.90" y="144.95" width="26.3" height="23.20" fill="#ed7d31"/><rect x="231.90" y="131.05" width="26.3" height="13.90" fill="#a5a5a5"/><rect x="231.90" y="105.95" width="26.3" height="25.10" fill="#ffc000"/><rect x="231.90" y="87.65" width="26.3" height="18.30" fill="#5b9bd5"/><rect x="231.90" y="74.75" width="26.3" height="12.90" fill="#70ad47"/><rect x="231.90" y="49.65" width="26.3" height="25.10" fill="#264478"/><rect x="231.90" y="37.85" width="26.3" height="11.80" fill="#9e480e"/><rect x="297.90" y="168.15" width="26.3" height="56.55" fill="#4472c4"/><rect x="297.90" y="144.55" width="26.3" height="23.60" fill="#ed7d31"/><rect x="297.90" y="130.55" width="26.3" height="14.00" fill="#a5a5a5"/><rect x="297.90" y="105.95" width="26.3" height="24.60" fill="#ffc000"/><rect x="297.90" y="88.05" width="26.3" height="17.90" fill="#5b9bd5"/><rect x="297.90" y="75.85" width="26.3" height="12.20" fill="#70ad47"/><rect x="297.90" y="50.55" width="26.3" height="25.30" fill="#264478"/><rect x="297.90" y="38.95" width="26.3" height="11.60" fill="#9e480e"/><rect x="364.10" y="167.75" width="26.3" height="56.95" fill="#4472c4"/><rect x="364.10" y="144.15" width="26.3" height="23.60" fill="#ed7d31"/><rect x="364.10" y="129.95" width="26.3" height="14.20" fill="#a5a5a5"/><rect x="364.10" y="105.95" width="26.3" height="24.00" fill="#ffc000"/><rect x="364.10" y="87.65" width="26.3" height="18.30" fill="#5b9bd5"/><rect x="364.10" y="74.75" width="26.3" height="12.90" fill="#70ad47"/><rect x="364.10" y="50.55" width="26.3" height="24.20" fill="#264478"/><rect x="364.10" y="38.95" width="26.3" height="11.60" fill="#9e480e"/><rect x="431.10" y="167.55" width="26.3" height="57.15" fill="#4472c4"/><rect x="431.10" y="143.45" width="26.3" height="24.10" fill="#ed7d31"/><rect x="431.10" y="129.95" width="26.3" height="13.50" fill="#a5a5a5"/><rect x="431.10" y="105.45" width="26.3" height="24.50" fill="#ffc000"/><rect x="431.10" y="87.65" width="26.3" height="17.80" fill="#5b9bd5"/><rect x="431.10" y="74.75" width="26.3" height="12.90" fill="#70ad47"/><rect x="431.10" y="50.75" width="26.3" height="24.00" fill="#264478"/><rect x="431.10" y="38.95" width="26.3" height="11.80" fill="#9e480e"/><rect x="497.20" y="167.55" width="26.3" height="57.15" fill="#4472c4"/><rect x="497.20" y="143.45" width="26.3" height="24.10" fill="#ed7d31"/><rect x="497.20" y="129.95" width="26.3" height="13.50" fill="#a5a5a5"/><rect x="497.20" y="105.45" width="26.3" height="24.50" fill="#ffc000"/><rect x="497.20" y="87.65" width="26.3" height="17.80" fill="#5b9bd5"/><rect x="497.20" y="74.75" width="26.3" height="12.90" fill="#70ad47"/><rect x="497.20" y="50.75" width="26.3" height="24.00" fill="#264478"/><rect x="497.20" y="38.95" width="26.3" height="11.80" fill="#9e480e"/><rect x="563.20" y="167.55" width="26.3" height="57.15" fill="#4472c4"/><rect x="563.20" y="143.45" width="26.3" height="24.10" fill="#ed7d31"/><rect x="563.20" y="129.55" width="26.3" height="13.90" fill="#a5a5a5"/><rect x="563.20" y="105.45" width="26.3" height="24.10" fill="#ffc000"/><rect x="563.20" y="87.15" width="26.3" height="18.30" fill="#5b9bd5"/><rect x="563.20" y="74.75" width="26.3" height="12.40" fill="#70ad47"/><rect x="563.20" y="51.35" width="26.3" height="23.40" fill="#264478"/><rect x="563.20" y="38.35" width="26.3" height="13.00" fill="#9e480e"/><rect x="629.90" y="166.45" width="26.3" height="58.25" fill="#4472c4"/><rect x="629.90" y="142.45" width="26.3" height="24.00" fill="#ed7d31"/><rect x="629.90" y="128.45" width="26.3" height="14.00" fill="#a5a5a5"/><rect x="629.90" y="104.45" width="26.3" height="24.00" fill="#ffc000"/><rect x="629.90" y="87.65" width="26.3" height="16.80" fill="#5b9bd5"/><rect x="629.90" y="74.75" width="26.3" height="12.90" fill="#70ad47"/><rect x="629.90" y="50.25" width="26.3" height="24.50" fill="#264478"/><rect x="629.90" y="38.95" width="26.3" height="11.30" fill="#9e480e"/><line x1="125.40" y1="168.65" x2="165.20" y2="168.65" stroke="#8c8c8c" stroke-width="0.9"/><line x1="125.40" y1="144.55" x2="165.20" y2="144.55" stroke="#8c8c8c" stroke-width="0.9"/><line x1="125.40" y1="131.25" x2="165.20" y2="130.55" stroke="#8c8c8c" stroke-width="0.9"/><line x1="125.40" y1="106.35" x2="165.20" y2="106.35" stroke="#8c8c8c" stroke-width="0.9"/><line x1="125.40" y1="88.25" x2="165.20" y2="88.25" stroke="#8c8c8c" stroke-width="0.9"/><line x1="125.40" y1="74.75" x2="165.20" y2="74.75" stroke="#8c8c8c" stroke-width="0.9"/><line x1="125.40" y1="49.65" x2="165.20" y2="49.65" stroke="#8c8c8c" stroke-width="0.9"/><line x1="125.40" y1="37.85" x2="165.20" y2="37.85" stroke="#8c8c8c" stroke-width="0.9"/><line x1="191.50" y1="168.65" x2="231.90" y2="168.15" stroke="#8c8c8c" stroke-width="0.9"/><line x1="191.50" y1="144.55" x2="231.90" y2="144.95" stroke="#8c8c8c" stroke-width="0.9"/><line x1="191.50" y1="130.55" x2="231.90" y2="131.05" stroke="#8c8c8c" stroke-width="0.9"/><line x1="191.50" y1="106.35" x2="231.90" y2="105.95" stroke="#8c8c8c" stroke-width="0.9"/><line x1="191.50" y1="88.25" x2="231.90" y2="87.65" stroke="#8c8c8c" stroke-width="0.9"/><line x1="191.50" y1="74.75" x2="231.90" y2="74.75" stroke="#8c8c8c" stroke-width="0.9"/><line x1="191.50" y1="49.65" x2="231.90" y2="49.65" stroke="#8c8c8c" stroke-width="0.9"/><line x1="191.50" y1="37.85" x2="231.90" y2="37.85" stroke="#8c8c8c" stroke-width="0.9"/><line x1="258.20" y1="168.15" x2="297.90" y2="168.15" stroke="#8c8c8c" stroke-width="0.9"/><line x1="258.20" y1="144.95" x2="297.90" y2="144.55" stroke="#8c8c8c" stroke-width="0.9"/><line x1="258.20" y1="131.05" x2="297.90" y2="130.55" stroke="#8c8c8c" stroke-width="0.9"/><line x1="258.20" y1="105.95" x2="297.90" y2="105.95" stroke="#8c8c8c" stroke-width="0.9"/><line x1="258.20" y1="87.65" x2="297.90" y2="88.05" stroke="#8c8c8c" stroke-width="0.9"/><line x1="258.20" y1="74.75" x2="297.90" y2="75.85" stroke="#8c8c8c" stroke-width="0.9"/><line x1="258.20" y1="49.65" x2="297.90" y2="50.55" stroke="#8c8c8c" stroke-width="0.9"/><line x1="258.20" y1="37.85" x2="297.90" y2="38.95" stroke="#8c8c8c" stroke-width="0.9"/><line x1="324.20" y1="168.15" x2="364.10" y2="167.75" stroke="#8c8c8c" stroke-width="0.9"/><line x1="324.20" y1="144.55" x2="364.10" y2="144.15" stroke="#8c8c8c" stroke-width="0.9"/><line x1="324.20" y1="130.55" x2="364.10" y2="129.95" stroke="#8c8c8c" stroke-width="0.9"/><line x1="324.20" y1="105.95" x2="364.10" y2="105.95" stroke="#8c8c8c" stroke-width="0.9"/><line x1="324.20" y1="88.05" x2="364.10" y2="87.65" stroke="#8c8c8c" stroke-width="0.9"/><line x1="324.20" y1="75.85" x2="364.10" y2="74.75" stroke="#8c8c8c" stroke-width="0.9"/><line x1="324.20" y1="50.55" x2="364.10" y2="50.55" stroke="#8c8c8c" stroke-width="0.9"/><line x1="324.20" y1="38.95" x2="364.10" y2="38.95" stroke="#8c8c8c" stroke-width="0.9"/><line x1="390.40" y1="167.75" x2="431.10" y2="167.55" stroke="#8c8c8c" stroke-width="0.9"/><line x1="390.40" y1="144.15" x2="431.10" y2="143.45" stroke="#8c8c8c" stroke-width="0.9"/><line x1="390.40" y1="129.95" x2="431.10" y2="129.95" stroke="#8c8c8c" stroke-width="0.9"/><line x1="390.40" y1="105.95" x2="431.10" y2="105.45" stroke="#8c8c8c" stroke-width="0.9"/><line x1="390.40" y1="87.65" x2="431.10" y2="87.65" stroke="#8c8c8c" stroke-width="0.9"/><line x1="390.40" y1="74.75" x2="431.10" y2="74.75" stroke="#8c8c8c" stroke-width="0.9"/><line x1="390.40" y1="50.55" x2="431.10" y2="50.75" stroke="#8c8c8c" stroke-width="0.9"/><line x1="390.40" y1="38.95" x2="431.10" y2="38.95" stroke="#8c8c8c" stroke-width="0.9"/><line x1="457.40" y1="167.55" x2="497.20" y2="167.55" stroke="#8c8c8c" stroke-width="0.9"/><line x1="457.40" y1="143.45" x2="497.20" y2="143.45" stroke="#8c8c8c" stroke-width="0.9"/><line x1="457.40" y1="129.95" x2="497.20" y2="129.95" stroke="#8c8c8c" stroke-width="0.9"/><line x1="457.40" y1="105.45" x2="497.20" y2="105.45" stroke="#8c8c8c" stroke-width="0.9"/><line x1="457.40" y1="87.65" x2="497.20" y2="87.65" stroke="#8c8c8c" stroke-width="0.9"/><line x1="457.40" y1="74.75" x2="497.20" y2="74.75" stroke="#8c8c8c" stroke-width="0.9"/><line x1="457.40" y1="50.75" x2="497.20" y2="50.75" stroke="#8c8c8c" stroke-width="0.9"/><line x1="457.40" y1="38.95" x2="497.20" y2="38.95" stroke="#8c8c8c" stroke-width="0.9"/><line x1="523.50" y1="167.55" x2="563.20" y2="167.55" stroke="#8c8c8c" stroke-width="0.9"/><line x1="523.50" y1="143.45" x2="563.20" y2="143.45" stroke="#8c8c8c" stroke-width="0.9"/><line x1="523.50" y1="129.95" x2="563.20" y2="129.55" stroke="#8c8c8c" stroke-width="0.9"/><line x1="523.50" y1="105.45" x2="563.20" y2="105.45" stroke="#8c8c8c" stroke-width="0.9"/><line x1="523.50" y1="87.65" x2="563.20" y2="87.15" stroke="#8c8c8c" stroke-width="0.9"/><line x1="523.50" y1="74.75" x2="563.20" y2="74.75" stroke="#8c8c8c" stroke-width="0.9"/><line x1="523.50" y1="50.75" x2="563.20" y2="51.35" stroke="#8c8c8c" stroke-width="0.9"/><line x1="523.50" y1="38.95" x2="563.20" y2="38.35" stroke="#8c8c8c" stroke-width="0.9"/><line x1="589.50" y1="167.55" x2="629.90" y2="166.45" stroke="#8c8c8c" stroke-width="0.9"/><line x1="589.50" y1="143.45" x2="629.90" y2="142.45" stroke="#8c8c8c" stroke-width="0.9"/><line x1="589.50" y1="129.55" x2="629.90" y2="128.45" stroke="#8c8c8c" stroke-width="0.9"/><line x1="589.50" y1="105.45" x2="629.90" y2="104.45" stroke="#8c8c8c" stroke-width="0.9"/><line x1="589.50" y1="87.15" x2="629.90" y2="87.65" stroke="#8c8c8c" stroke-width="0.9"/><line x1="589.50" y1="74.75" x2="629.90" y2="74.75" stroke="#8c8c8c" stroke-width="0.9"/><line x1="589.50" y1="51.35" x2="629.90" y2="50.25" stroke="#8c8c8c" stroke-width="0.9"/><line x1="589.50" y1="38.35" x2="629.90" y2="38.95" stroke="#8c8c8c" stroke-width="0.9"/></svg>
<div style="left:-243px;top:500.7px;width:400px;height:16px;line-height:16px;text-align:right;font-size:12px;color:#595959;">0</div>
<div style="left:-243px;top:479.63px;width:400px;height:16px;line-height:16px;text-align:right;font-size:12px;color:#595959;">1,000,000</div>
<div style="left:-243px;top:458.56px;width:400px;height:16px;line-height:16px;text-align:right;font-size:12px;color:#595959;">2,000,000</div>
<div style="left:-243px;top:437.49px;width:400px;height:16px;line-height:16px;text-align:right;font-size:12px;color:#595959;">3,000,000</div>
<div style="left:-243px;top:416.41999999999996px;width:400px;height:16px;line-height:16px;text-align:right;font-size:12px;color:#595959;">4,000,000</div>
<div style="left:-243px;top:395.35px;width:400px;height:16px;line-height:16px;text-align:right;font-size:12px;color:#595959;">5,000,000</div>
<div style="left:-243px;top:374.28px;width:400px;height:16px;line-height:16px;text-align:right;font-size:12px;color:#595959;">6,000,000</div>
<div style="left:-243px;top:353.21px;width:400px;height:16px;line-height:16px;text-align:right;font-size:12px;color:#595959;">7,000,000</div>
<div style="left:-243px;top:332.14px;width:400px;height:16px;line-height:16px;text-align:right;font-size:12px;color:#595959;">8,000,000</div>
<div style="left:-243px;top:311.07px;width:400px;height:16px;line-height:16px;text-align:right;font-size:12px;color:#595959;">9,000,000</div>
<div style="left:-243px;top:290.0px;width:400px;height:16px;line-height:16px;text-align:right;font-size:12px;color:#595959;">10,000,000</div>
<div style="left:161.25px;top:517.0px;width:80px;height:16px;line-height:16px;text-align:center;font-size:12px;color:#595959;">平成23年</div>
<div style="left:227.34999999999997px;top:517.0px;width:80px;height:16px;line-height:16px;text-align:center;font-size:12px;color:#595959;">平成24年</div>
<div style="left:294.04999999999995px;top:517.0px;width:80px;height:16px;line-height:16px;text-align:center;font-size:12px;color:#595959;">平成25年</div>
<div style="left:360.04999999999995px;top:517.0px;width:80px;height:16px;line-height:16px;text-align:center;font-size:12px;color:#595959;">平成26年</div>
<div style="left:426.25px;top:517.0px;width:80px;height:16px;line-height:16px;text-align:center;font-size:12px;color:#595959;">平成27年</div>
<div style="left:493.25px;top:517.0px;width:80px;height:16px;line-height:16px;text-align:center;font-size:12px;color:#595959;">平成28年</div>
<div style="left:559.35px;top:517.0px;width:80px;height:16px;line-height:16px;text-align:center;font-size:12px;color:#595959;">平成29年</div>
<div style="left:625.35px;top:517.0px;width:80px;height:16px;line-height:16px;text-align:center;font-size:12px;color:#595959;">平成30年</div>
<div style="left:692.05px;top:517.0px;width:80px;height:16px;line-height:16px;text-align:center;font-size:12px;color:#595959;">令和元年</div>
<div style="left:137.4px;top:548.5px;width:6px;height:6px;background:#9e480e"></div>
<div style="left:144.4px;top:543.5px;width:400px;height:16px;line-height:16px;font-size:12px;color:#595959;">泉南地域</div>
<div style="left:207.2px;top:548.5px;width:6px;height:6px;background:#264478"></div>
<div style="left:214.2px;top:543.5px;width:400px;height:16px;line-height:16px;font-size:12px;color:#595959;">泉北地域</div>
<div style="left:279.8px;top:548.5px;width:6px;height:6px;background:#70ad47"></div>
<div style="left:286.8px;top:543.5px;width:400px;height:16px;line-height:16px;font-size:12px;color:#595959;">南河内地域</div>
<div style="left:362px;top:548.5px;width:6px;height:6px;background:#5b9bd5"></div>
<div style="left:369px;top:543.5px;width:400px;height:16px;line-height:16px;font-size:12px;color:#595959;">中河内地域</div>
<div style="left:443.6px;top:548.5px;width:6px;height:6px;background:#ffc000"></div>
<div style="left:450.6px;top:543.5px;width:400px;height:16px;line-height:16px;font-size:12px;color:#595959;">北河内地域</div>
<div style="left:526.7px;top:548.5px;width:6px;height:6px;background:#a5a5a5"></div>
<div style="left:533.7px;top:543.5px;width:400px;height:16px;line-height:16px;font-size:12px;color:#595959;">豊能地域</div>
<div style="left:596.4px;top:548.5px;width:6px;height:6px;background:#ed7d31"></div>
<div style="left:603.4px;top:543.5px;width:400px;height:16px;line-height:16px;font-size:12px;color:#595959;">三島地域</div>
<div style="left:668px;top:548.5px;width:6px;height:6px;background:#4472c4"></div>
<div style="left:675px;top:543.5px;width:400px;height:16px;line-height:16px;font-size:12px;color:#595959;">大阪市地域</div>
<svg style="position:absolute;left:83px;top:278px;" width="12" height="12" viewBox="0 0 12 12"><circle cx="6" cy="6" r="4.6" fill="#fff" stroke="#8c8c8c" stroke-width="1.5"/></svg>
<svg style="position:absolute;left:83px;top:421.5px;" width="12" height="12" viewBox="0 0 12 12"><circle cx="6" cy="6" r="4.6" fill="#fff" stroke="#8c8c8c" stroke-width="1.5"/></svg>
<svg style="position:absolute;left:83px;top:565px;" width="12" height="12" viewBox="0 0 12 12"><circle cx="6" cy="6" r="4.6" fill="#fff" stroke="#8c8c8c" stroke-width="1.5"/></svg>
<svg style="position:absolute;left:428.5px;top:278px;" width="12" height="12" viewBox="0 0 12 12"><circle cx="6" cy="6" r="4.6" fill="#fff" stroke="#8c8c8c" stroke-width="1.5"/></svg>
<svg style="position:absolute;left:428.5px;top:565px;" width="12" height="12" viewBox="0 0 12 12"><circle cx="6" cy="6" r="4.6" fill="#fff" stroke="#8c8c8c" stroke-width="1.5"/></svg>
<svg style="position:absolute;left:774px;top:278px;" width="12" height="12" viewBox="0 0 12 12"><circle cx="6" cy="6" r="4.6" fill="#fff" stroke="#8c8c8c" stroke-width="1.5"/></svg>
<svg style="position:absolute;left:774px;top:421.5px;" width="12" height="12" viewBox="0 0 12 12"><circle cx="6" cy="6" r="4.6" fill="#fff" stroke="#8c8c8c" stroke-width="1.5"/></svg>
<svg style="position:absolute;left:774px;top:565px;" width="12" height="12" viewBox="0 0 12 12"><circle cx="6" cy="6" r="4.6" fill="#fff" stroke="#8c8c8c" stroke-width="1.5"/></svg>
<div style="left:793px;top:283px;width:28px;height:28px;background:#fff;border:1px solid #c6c6c6;box-sizing:border-box"></div>
<div style="left:793px;top:321px;width:28px;height:28px;background:#fff;border:1px solid #c6c6c6;box-sizing:border-box"></div>
<div style="left:793px;top:359px;width:28px;height:28px;background:#fff;border:1px solid #c6c6c6;box-sizing:border-box"></div>
<svg style="position:absolute;left:793px;top:283px;" width="28" height="28" viewBox="0 0 28 28"><path d="M13.5 3 V23.5 M3.2 13.3 H23.8" stroke="#2e9c48" stroke-width="1.1"/></svg>
<svg style="position:absolute;left:793px;top:321px;" width="28" height="28" viewBox="0 0 28 28"><path d="M11.3 15.8 L22 4.6 C23 3.6 25 3.8 24.7 5.4 L14.3 18.4Z" fill="#fff" stroke="#444" stroke-width="0.9"/><path d="M2 21.5 C5 21 6 19 8 17 C10 15.5 13 16 13.8 18.5 C14 21 12 23.5 8 23.5 C5 23.5 3.5 22.5 2 21.5Z" fill="#83bbed" stroke="#1c6bbd" stroke-width="1"/></svg>
<svg style="position:absolute;left:793px;top:359px;" width="28" height="28" viewBox="0 0 28 28"><path d="M3.2 3.2 H23.9 V7.3 L15.2 15.5 V24.4 H11.7 V15.5 L3.2 7.3Z" fill="#fff" stroke="#505050" stroke-width="1.2" stroke-linejoin="round"/></svg>
<div style="left:1054px;top:214px;width:20px;height:409px;background:#e6e6e6"></div>
<div style="left:1056px;top:230px;width:15px;height:381px;background:#dadada"></div>
<div style="left:1056px;top:216px;width:15px;height:15px;background:#fff;border:1px solid #c6c6c6;box-sizing:border-box"></div>
<svg style="position:absolute;left:1059px;top:220px;" width="9" height="6" viewBox="0 0 9 6"><path d="M0.5 5 L4.5 1 L8.5 5Z" fill="#777"/></svg>
<div style="left:1056px;top:230px;width:15px;height:110px;background:#fff;border:1px solid #c6c6c6;box-sizing:border-box"></div>
<div style="left:1056px;top:610px;width:15px;height:14px;background:#fff;border:1px solid #c6c6c6;box-sizing:border-box"></div>
<svg style="position:absolute;left:1059px;top:614px;" width="9" height="6" viewBox="0 0 9 6"><path d="M0.5 1 L4.5 5 L8.5 1Z" fill="#777"/></svg>
<div style="left:1px;top:624px;width:1073px;height:29px;background:#e6e6e6"></div>
<svg style="position:absolute;left:26px;top:633px;" width="7" height="9" viewBox="0 0 7 9"><path d="M6 0.5 V8.5 L1 4.5Z" fill="#217346"/></svg>
<svg style="position:absolute;left:56px;top:633px;" width="7" height="9" viewBox="0 0 7 9"><path d="M1 0.5 V8.5 L6 4.5Z" fill="#b5b5b5"/></svg>
<div style="left:82px;top:640px;width:2px;height:2px;background:#217346"></div>
<div style="left:86px;top:640px;width:2px;height:2px;background:#217346"></div>
<div style="left:90px;top:640px;width:2px;height:2px;background:#217346"></div>
<div style="left:101px;top:623px;width:77px;height:25px;background:#fff"></div>
<div style="left:101px;top:647px;width:77px;height:2px;background:#217346"></div>
<div style="left:112.6px;top:627.3px;height:20px;line-height:20px;font-size:13px;color:#217346;letter-spacing:0.03px;">各年人口</div>
<div style="left:189.6px;top:627.3px;height:20px;line-height:20px;font-size:13px;color:#444;letter-spacing:-0.06px;">地域気象観測所平均気温</div>
<div style="left:344px;top:629px;width:1px;height:17px;background:#c6c6c6"></div>
<div style="left:355.7px;top:627.3px;height:20px;line-height:20px;font-size:13px;color:#444;letter-spacing:-0.03px;">地域気象観測所降水量</div>
<div style="left:497px;top:629px;width:1px;height:17px;background:#c6c6c6"></div>
<svg style="position:absolute;left:530px;top:630px;" width="17" height="17" viewBox="0 0 17 17"><circle cx="8.5" cy="8.5" r="7" fill="none" stroke="#666" stroke-width="1.1"/><path d="M8.5 4.5 V12.5 M4.5 8.5 H12.5" stroke="#666" stroke-width="1.1"/></svg>
<div style="left:645px;top:633px;width:2px;height:2px;background:#b0b0b0"></div>
<div style="left:645px;top:637px;width:2px;height:2px;background:#b0b0b0"></div>
<div style="left:645px;top:641px;width:2px;height:2px;background:#b0b0b0"></div>
<div style="left:662px;top:631px;width:391px;height:15px;background:#dadada"></div>
<div style="left:662px;top:631px;width:15px;height:15px;background:#fff;border:1px solid #c6c6c6;box-sizing:border-box"></div>
<svg style="position:absolute;left:666px;top:634px;" width="6" height="9" viewBox="0 0 6 9"><path d="M5 0.5 V8.5 L1 4.5Z" fill="#777"/></svg>
<div style="left:676px;top:631px;width:329px;height:15px;background:#fff;border:1px solid #c6c6c6;box-sizing:border-box"></div>
<div style="left:1038px;top:631px;width:15px;height:15px;background:#fff;border:1px solid #c6c6c6;box-sizing:border-box"></div>
<svg style="position:absolute;left:1042px;top:634px;" width="6" height="9" viewBox="0 0 6 9"><path d="M1 0.5 V8.5 L5 4.5Z" fill="#777"/></svg>
<div style="left:1px;top:652px;width:1073px;height:1px;background:#d2d2d2"></div>
<div style="left:1px;top:653px;width:1073px;height:21px;background:#f3f2f1"></div>
<svg style="position:absolute;left:8px;top:656px;" width="16" height="14" viewBox="0 0 16 14"><path d="M1.5 1.5 H14.5 V5 M1.5 1.5 V12.5 H7" fill="none" stroke="#555" stroke-width="1.1"/><path d="M1.5 4.5 H14.5 M3.5 7 H8 M3.5 9.5 H6.5" stroke="#555" stroke-width="1"/><circle cx="11" cy="10" r="3.5" fill="none" stroke="#555" stroke-width="1.1"/><circle cx="11" cy="10" r="1.5" fill="#555"/></svg>
<div style="left:757px;top:653px;width:40px;height:21px;background:#c8c8c8"></div>
<svg style="position:absolute;left:769px;top:655px;" width="16" height="16" viewBox="0 0 16 16"><path d="M2.5 2.5 H13.5 V13.5 H2.5Z M2.5 6.2 H13.5 M2.5 9.8 H13.5 M6.2 2.5 V13.5 M9.8 2.5 V13.5" fill="none" stroke="#333" stroke-width="1.1"/></svg>
<svg style="position:absolute;left:809px;top:655px;" width="16" height="16" viewBox="0 0 16 16"><rect x="1.6" y="1.7" width="13" height="12" fill="none" stroke="#444" stroke-width="1.1"/><rect x="4.8" y="3.7" width="6.8" height="8" fill="none" stroke="#444" stroke-width="1.1"/><path d="M6.3 5.8 H10.2 M6.3 7.7 H10.2 M6.3 9.6 H10.2" stroke="#444" stroke-width="0.9"/></svg>
<svg style="position:absolute;left:848px;top:655px;" width="16" height="16" viewBox="0 0 16 16"><rect x="2.6" y="1.7" width="13" height="12" fill="none" stroke="#444" stroke-width="1.1"/><path d="M2.6 8.5 H10.6 V1.7 M6.3 1.7 V8.5 M9 1.7 V8.5" fill="none" stroke="#444" stroke-width="1"/></svg>
<div style="left:882px;top:662px;width:9px;height:1px;background:#555"></div>
<div style="left:897px;top:662px;width:99px;height:1px;background:#aaa"></div>
<div style="left:944px;top:657px;width:4px;height:11px;background:#555"></div>
<svg style="position:absolute;left:999px;top:657px;" width="11" height="11" viewBox="0 0 11 11"><path d="M5.5 1 V10 M1 5.5 H10" stroke="#555" stroke-width="1.1"/></svg>
<div style="left:655px;top:653.5px;width:400px;height:18px;line-height:18px;text-align:right;font-size:13px;color:#444;">100%</div>
<div style="left:0px;top:35px;width:1px;height:640px;background:#217346"></div>
<div style="left:1074px;top:35px;width:1px;height:640px;background:#217346"></div>
<div style="left:0px;top:674px;width:1075px;height:1px;background:#217346"></div>
</body></html>
